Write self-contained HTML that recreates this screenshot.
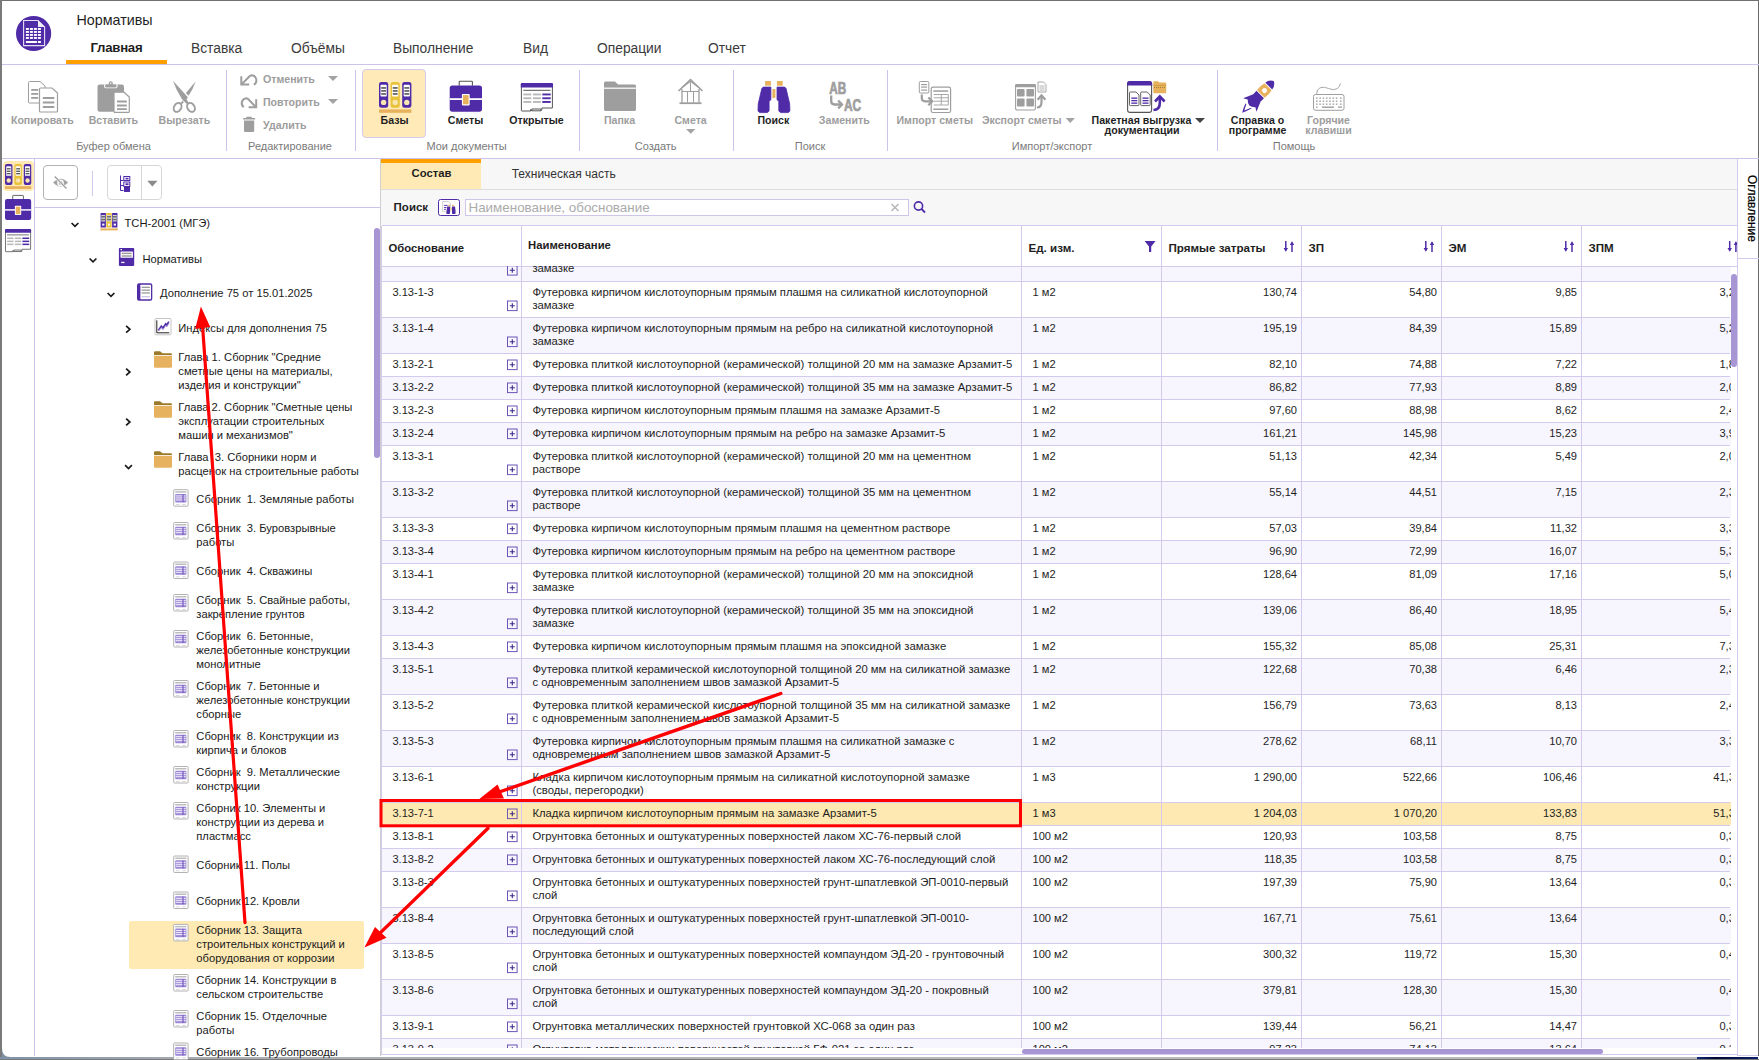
<!DOCTYPE html>
<html><head><meta charset="utf-8"><title>Нормативы</title>
<style>
html,body{margin:0;padding:0;}
body{width:1759px;height:1060px;position:relative;overflow:hidden;background:#fff;font-family:"Liberation Sans", sans-serif;color:#222;}
.b{position:absolute;}
.t{position:absolute;white-space:pre;}
.clip{position:absolute;overflow:hidden;}
svg{overflow:visible;}
</style></head><body>
<div class="b" style="left:0px;top:0px;width:1759px;height:1px;background:#707070;"></div>
<div class="b" style="left:0px;top:0px;width:2px;height:1060px;background:#7a7a7a;"></div>
<div class="b" style="left:1758px;top:0px;width:1px;height:1056px;background:#6a6a6a;"></div>
<div class="b" style="left:0px;top:1056.8px;width:1697px;height:2.3px;background:linear-gradient(90deg,#7f93a8,#a9adb2 12%,#bcbcbc 60%,#b9b9b9);"></div>
<div class="b" style="left:1697px;top:1056.8px;width:61px;height:2.3px;background:linear-gradient(90deg,#10287a,#020833 30%,#0a1f6a);"></div>
<div class="b" style="left:0px;top:1059px;width:1759px;height:1px;background:#7a7a7a;"></div>
<div class="b" style="left:66px;top:60px;width:101px;height:4px;background:#ff9f00;"></div>
<div class="b" style="left:2px;top:64px;width:1757px;height:1px;background:#cdc3ea;"></div>
<div class="b" style="left:2px;top:158px;width:1757px;height:1px;background:#cdc3ea;"></div>
<div class="b" style="left:226px;top:70px;width:1px;height:81px;background:#cdc3ea;"></div>
<div class="b" style="left:355px;top:70px;width:1px;height:81px;background:#cdc3ea;"></div>
<div class="b" style="left:579px;top:70px;width:1px;height:81px;background:#cdc3ea;"></div>
<div class="b" style="left:733px;top:70px;width:1px;height:81px;background:#cdc3ea;"></div>
<div class="b" style="left:887px;top:70px;width:1px;height:81px;background:#cdc3ea;"></div>
<div class="b" style="left:1217px;top:70px;width:1px;height:81px;background:#cdc3ea;"></div>
<div class="b" style="left:362px;top:69px;width:64px;height:68.5px;background:#ffeab8;border:1px solid #d5c9ee;border-radius:4px;box-sizing:border-box;"></div>
<div class="b" style="left:34px;top:159px;width:1px;height:897px;background:#cdc3ea;"></div>
<div class="b" style="left:3px;top:161px;width:30.7px;height:29.6px;background:#ffe9b5;border-radius:4px;"></div>
<div class="b" style="left:35px;top:207px;width:345px;height:1px;background:#cdc3ea;"></div>
<div class="b" style="left:43.3px;top:165.2px;width:34.5px;height:35.3px;border:1.2px solid #b3b3b3;border-radius:4px;box-sizing:border-box;"></div>
<div class="b" style="left:92px;top:171px;width:1px;height:25px;background:#d3c9ee;"></div>
<div class="b" style="left:107.3px;top:165.2px;width:54.5px;height:35.3px;border:1px solid #d6d6d6;border-radius:4px;box-sizing:border-box;"></div>
<div class="b" style="left:141px;top:166px;width:1px;height:34px;background:#d6d6d6;"></div>
<div class="b" style="left:374.2px;top:228px;width:5.6px;height:230px;background:#a896d4;border-radius:3px;"></div>
<div class="b" style="left:129px;top:921px;width:235px;height:47.7px;background:#ffeab4;border-radius:2px;"></div>
<div class="b" style="left:380px;top:159px;width:1px;height:897px;background:#cfcfcf;"></div>
<div class="b" style="left:381px;top:159px;width:1356px;height:67px;background:#f7f7f7;"></div>
<div class="b" style="left:381px;top:189px;width:1356px;height:1px;background:#dedede;"></div>
<div class="b" style="left:381px;top:159px;width:100px;height:30px;background:#ffeab5;"></div>
<div class="b" style="left:381px;top:159px;width:100px;height:4px;background:#ff9f00;"></div>
<div class="b" style="left:438px;top:198.9px;width:22px;height:17px;background:#fff;border:1px solid #4f2ba8;border-radius:2.5px;box-sizing:border-box;"></div>
<div class="b" style="left:465px;top:199px;width:444px;height:17px;background:#fff;border:1px solid #cfc5ea;box-sizing:border-box;"></div>
<div class="b" style="left:382px;top:225px;width:1355px;height:1px;background:#d3caee;"></div>
<div class="b" style="left:382px;top:226px;width:1355px;height:40px;background:#fff;"></div>
<div class="b" style="left:382px;top:266px;width:1355px;height:1px;background:#d3caee;"></div>
<div class="clip" style="left:380px;top:266px;width:1351px;height:782px;"><div class="b" style="left:2px;top:1px;width:1349px;height:14px;background:#f7f5fd;"></div>
<div class="b" style="left:2px;top:15px;width:1349px;height:36px;background:#fff;"></div>
<div class="b" style="left:0px;top:15px;width:1350px;height:1px;background:#d3caee;"></div>
<div class="b" style="left:2px;top:51px;width:1349px;height:36px;background:#f7f5fd;"></div>
<div class="b" style="left:0px;top:51px;width:1350px;height:1px;background:#d3caee;"></div>
<div class="b" style="left:2px;top:87px;width:1349px;height:23px;background:#fff;"></div>
<div class="b" style="left:0px;top:87px;width:1350px;height:1px;background:#d3caee;"></div>
<div class="b" style="left:2px;top:110px;width:1349px;height:23px;background:#f7f5fd;"></div>
<div class="b" style="left:0px;top:110px;width:1350px;height:1px;background:#d3caee;"></div>
<div class="b" style="left:2px;top:133px;width:1349px;height:23px;background:#fff;"></div>
<div class="b" style="left:0px;top:133px;width:1350px;height:1px;background:#d3caee;"></div>
<div class="b" style="left:2px;top:156px;width:1349px;height:23px;background:#f7f5fd;"></div>
<div class="b" style="left:0px;top:156px;width:1350px;height:1px;background:#d3caee;"></div>
<div class="b" style="left:2px;top:179px;width:1349px;height:36px;background:#fff;"></div>
<div class="b" style="left:0px;top:179px;width:1350px;height:1px;background:#d3caee;"></div>
<div class="b" style="left:2px;top:215px;width:1349px;height:36px;background:#f7f5fd;"></div>
<div class="b" style="left:0px;top:215px;width:1350px;height:1px;background:#d3caee;"></div>
<div class="b" style="left:2px;top:251px;width:1349px;height:23px;background:#fff;"></div>
<div class="b" style="left:0px;top:251px;width:1350px;height:1px;background:#d3caee;"></div>
<div class="b" style="left:2px;top:274px;width:1349px;height:23px;background:#f7f5fd;"></div>
<div class="b" style="left:0px;top:274px;width:1350px;height:1px;background:#d3caee;"></div>
<div class="b" style="left:2px;top:297px;width:1349px;height:36px;background:#fff;"></div>
<div class="b" style="left:0px;top:297px;width:1350px;height:1px;background:#d3caee;"></div>
<div class="b" style="left:2px;top:333px;width:1349px;height:36px;background:#f7f5fd;"></div>
<div class="b" style="left:0px;top:333px;width:1350px;height:1px;background:#d3caee;"></div>
<div class="b" style="left:2px;top:369px;width:1349px;height:23px;background:#fff;"></div>
<div class="b" style="left:0px;top:369px;width:1350px;height:1px;background:#d3caee;"></div>
<div class="b" style="left:2px;top:392px;width:1349px;height:36px;background:#f7f5fd;"></div>
<div class="b" style="left:0px;top:392px;width:1350px;height:1px;background:#d3caee;"></div>
<div class="b" style="left:2px;top:428px;width:1349px;height:36px;background:#fff;"></div>
<div class="b" style="left:0px;top:428px;width:1350px;height:1px;background:#d3caee;"></div>
<div class="b" style="left:2px;top:464px;width:1349px;height:36px;background:#f7f5fd;"></div>
<div class="b" style="left:0px;top:464px;width:1350px;height:1px;background:#d3caee;"></div>
<div class="b" style="left:2px;top:500px;width:1349px;height:36px;background:#fff;"></div>
<div class="b" style="left:0px;top:500px;width:1350px;height:1px;background:#d3caee;"></div>
<div class="b" style="left:2px;top:536px;width:1349px;height:23px;background:#fde9b1;"></div>
<div class="b" style="left:0px;top:536px;width:1350px;height:1px;background:#d3caee;"></div>
<div class="b" style="left:2px;top:559px;width:1349px;height:23px;background:#fff;"></div>
<div class="b" style="left:0px;top:559px;width:1350px;height:1px;background:#d3caee;"></div>
<div class="b" style="left:2px;top:582px;width:1349px;height:23px;background:#f7f5fd;"></div>
<div class="b" style="left:0px;top:582px;width:1350px;height:1px;background:#d3caee;"></div>
<div class="b" style="left:2px;top:605px;width:1349px;height:36px;background:#fff;"></div>
<div class="b" style="left:0px;top:605px;width:1350px;height:1px;background:#d3caee;"></div>
<div class="b" style="left:2px;top:641px;width:1349px;height:36px;background:#f7f5fd;"></div>
<div class="b" style="left:0px;top:641px;width:1350px;height:1px;background:#d3caee;"></div>
<div class="b" style="left:2px;top:677px;width:1349px;height:36px;background:#fff;"></div>
<div class="b" style="left:0px;top:677px;width:1350px;height:1px;background:#d3caee;"></div>
<div class="b" style="left:2px;top:713px;width:1349px;height:36px;background:#f7f5fd;"></div>
<div class="b" style="left:0px;top:713px;width:1350px;height:1px;background:#d3caee;"></div>
<div class="b" style="left:2px;top:749px;width:1349px;height:23px;background:#fff;"></div>
<div class="b" style="left:0px;top:749px;width:1350px;height:1px;background:#d3caee;"></div>
<div class="b" style="left:2px;top:772px;width:1349px;height:23px;background:#f7f5fd;"></div>
<div class="b" style="left:0px;top:772px;width:1350px;height:1px;background:#d3caee;"></div>
<div class="b" style="left:141px;top:0px;width:1px;height:800px;background:#d3caee;"></div>
<div class="b" style="left:641px;top:0px;width:1px;height:800px;background:#d3caee;"></div>
<div class="b" style="left:781px;top:0px;width:1px;height:800px;background:#d3caee;"></div>
<div class="b" style="left:921px;top:0px;width:1px;height:800px;background:#d3caee;"></div>
<div class="b" style="left:1061px;top:0px;width:1px;height:800px;background:#d3caee;"></div>
<div class="b" style="left:1201px;top:0px;width:1px;height:800px;background:#d3caee;"></div>
<svg class="b" style="left:0;top:0" width="1351" height="800"><rect x="127.5" y="-0.5" width="9.6" height="9.6" fill="none" stroke="#6d55b8" stroke-width="1"/><path d="M129.8 4.3 H134.8 M132.3 1.7999999999999998 V6.8" stroke="#3d2a8a" stroke-width="1.1"/><rect x="127.5" y="35.0" width="9.6" height="9.6" fill="none" stroke="#6d55b8" stroke-width="1"/><path d="M129.8 39.8 H134.8 M132.3 37.3 V42.3" stroke="#3d2a8a" stroke-width="1.1"/><rect x="127.5" y="71.0" width="9.6" height="9.6" fill="none" stroke="#6d55b8" stroke-width="1"/><path d="M129.8 75.8 H134.8 M132.3 73.3 V78.3" stroke="#3d2a8a" stroke-width="1.1"/><rect x="127.5" y="94.0" width="9.6" height="9.6" fill="none" stroke="#6d55b8" stroke-width="1"/><path d="M129.8 98.8 H134.8 M132.3 96.3 V101.3" stroke="#3d2a8a" stroke-width="1.1"/><rect x="127.5" y="117.0" width="9.6" height="9.6" fill="none" stroke="#6d55b8" stroke-width="1"/><path d="M129.8 121.8 H134.8 M132.3 119.3 V124.3" stroke="#3d2a8a" stroke-width="1.1"/><rect x="127.5" y="140.0" width="9.6" height="9.6" fill="none" stroke="#6d55b8" stroke-width="1"/><path d="M129.8 144.8 H134.8 M132.3 142.3 V147.3" stroke="#3d2a8a" stroke-width="1.1"/><rect x="127.5" y="163.0" width="9.6" height="9.6" fill="none" stroke="#6d55b8" stroke-width="1"/><path d="M129.8 167.8 H134.8 M132.3 165.3 V170.3" stroke="#3d2a8a" stroke-width="1.1"/><rect x="127.5" y="199.0" width="9.6" height="9.6" fill="none" stroke="#6d55b8" stroke-width="1"/><path d="M129.8 203.8 H134.8 M132.3 201.3 V206.3" stroke="#3d2a8a" stroke-width="1.1"/><rect x="127.5" y="235.0" width="9.6" height="9.6" fill="none" stroke="#6d55b8" stroke-width="1"/><path d="M129.8 239.8 H134.8 M132.3 237.3 V242.3" stroke="#3d2a8a" stroke-width="1.1"/><rect x="127.5" y="258.0" width="9.6" height="9.6" fill="none" stroke="#6d55b8" stroke-width="1"/><path d="M129.8 262.8 H134.8 M132.3 260.3 V265.3" stroke="#3d2a8a" stroke-width="1.1"/><rect x="127.5" y="281.0" width="9.6" height="9.6" fill="none" stroke="#6d55b8" stroke-width="1"/><path d="M129.8 285.8 H134.8 M132.3 283.3 V288.3" stroke="#3d2a8a" stroke-width="1.1"/><rect x="127.5" y="317.0" width="9.6" height="9.6" fill="none" stroke="#6d55b8" stroke-width="1"/><path d="M129.8 321.8 H134.8 M132.3 319.3 V324.3" stroke="#3d2a8a" stroke-width="1.1"/><rect x="127.5" y="353.0" width="9.6" height="9.6" fill="none" stroke="#6d55b8" stroke-width="1"/><path d="M129.8 357.8 H134.8 M132.3 355.3 V360.3" stroke="#3d2a8a" stroke-width="1.1"/><rect x="127.5" y="376.0" width="9.6" height="9.6" fill="none" stroke="#6d55b8" stroke-width="1"/><path d="M129.8 380.8 H134.8 M132.3 378.3 V383.3" stroke="#3d2a8a" stroke-width="1.1"/><rect x="127.5" y="412.0" width="9.6" height="9.6" fill="none" stroke="#6d55b8" stroke-width="1"/><path d="M129.8 416.8 H134.8 M132.3 414.3 V419.3" stroke="#3d2a8a" stroke-width="1.1"/><rect x="127.5" y="448.0" width="9.6" height="9.6" fill="none" stroke="#6d55b8" stroke-width="1"/><path d="M129.8 452.8 H134.8 M132.3 450.3 V455.3" stroke="#3d2a8a" stroke-width="1.1"/><rect x="127.5" y="484.0" width="9.6" height="9.6" fill="none" stroke="#6d55b8" stroke-width="1"/><path d="M129.8 488.8 H134.8 M132.3 486.3 V491.3" stroke="#3d2a8a" stroke-width="1.1"/><rect x="127.5" y="520.0" width="9.6" height="9.6" fill="none" stroke="#6d55b8" stroke-width="1"/><path d="M129.8 524.8 H134.8 M132.3 522.3 V527.3" stroke="#3d2a8a" stroke-width="1.1"/><rect x="127.5" y="543.0" width="9.6" height="9.6" fill="none" stroke="#6d55b8" stroke-width="1"/><path d="M129.8 547.8 H134.8 M132.3 545.3 V550.3" stroke="#3d2a8a" stroke-width="1.1"/><rect x="127.5" y="566.0" width="9.6" height="9.6" fill="none" stroke="#6d55b8" stroke-width="1"/><path d="M129.8 570.8 H134.8 M132.3 568.3 V573.3" stroke="#3d2a8a" stroke-width="1.1"/><rect x="127.5" y="589.0" width="9.6" height="9.6" fill="none" stroke="#6d55b8" stroke-width="1"/><path d="M129.8 593.8 H134.8 M132.3 591.3 V596.3" stroke="#3d2a8a" stroke-width="1.1"/><rect x="127.5" y="625.0" width="9.6" height="9.6" fill="none" stroke="#6d55b8" stroke-width="1"/><path d="M129.8 629.8 H134.8 M132.3 627.3 V632.3" stroke="#3d2a8a" stroke-width="1.1"/><rect x="127.5" y="661.0" width="9.6" height="9.6" fill="none" stroke="#6d55b8" stroke-width="1"/><path d="M129.8 665.8 H134.8 M132.3 663.3 V668.3" stroke="#3d2a8a" stroke-width="1.1"/><rect x="127.5" y="697.0" width="9.6" height="9.6" fill="none" stroke="#6d55b8" stroke-width="1"/><path d="M129.8 701.8 H134.8 M132.3 699.3 V704.3" stroke="#3d2a8a" stroke-width="1.1"/><rect x="127.5" y="733.0" width="9.6" height="9.6" fill="none" stroke="#6d55b8" stroke-width="1"/><path d="M129.8 737.8 H134.8 M132.3 735.3 V740.3" stroke="#3d2a8a" stroke-width="1.1"/><rect x="127.5" y="756.0" width="9.6" height="9.6" fill="none" stroke="#6d55b8" stroke-width="1"/><path d="M129.8 760.8 H134.8 M132.3 758.3 V763.3" stroke="#3d2a8a" stroke-width="1.1"/><rect x="127.5" y="779.0" width="9.6" height="9.6" fill="none" stroke="#6d55b8" stroke-width="1"/><path d="M129.8 783.8 H134.8 M132.3 781.3 V786.3" stroke="#3d2a8a" stroke-width="1.1"/></svg><div class="t" style="left:152.39999999999998px;top:-2.57px;font-size:11.3px;line-height:11.3px;color:#1e1e1e;">замазке</div>
<div class="t" style="left:12.399999999999977px;top:20.60px;font-size:11.1px;line-height:11.1px;color:#1e1e1e;">3.13-1-3</div>
<div class="t" style="left:152.39999999999998px;top:19.58px;font-size:11.3px;line-height:13px;color:#1e1e1e;">Футеровка кирпичом кислотоупорным прямым плашмя на силикатной кислотоупорной<br>замазке</div>
<div class="t" style="left:652.5px;top:20.60px;font-size:11.1px;line-height:11.1px;color:#1e1e1e;">1 м2</div>
<div class="t" style="left:517px;width:400px;text-align:right;top:20.60px;font-size:11.1px;line-height:11.1px;color:#1e1e1e;">130,74</div>
<div class="t" style="left:657px;width:400px;text-align:right;top:20.60px;font-size:11.1px;line-height:11.1px;color:#1e1e1e;">54,80</div>
<div class="t" style="left:797px;width:400px;text-align:right;top:20.60px;font-size:11.1px;line-height:11.1px;color:#1e1e1e;">9,85</div>
<div class="t" style="left:961px;width:400px;text-align:right;top:20.60px;font-size:11.1px;line-height:11.1px;color:#1e1e1e;">3,20</div>
<div class="t" style="left:12.399999999999977px;top:56.60px;font-size:11.1px;line-height:11.1px;color:#1e1e1e;">3.13-1-4</div>
<div class="t" style="left:152.39999999999998px;top:55.58px;font-size:11.3px;line-height:13px;color:#1e1e1e;">Футеровка кирпичом кислотоупорным прямым на ребро на силикатной кислотоупорной<br>замазке</div>
<div class="t" style="left:652.5px;top:56.60px;font-size:11.1px;line-height:11.1px;color:#1e1e1e;">1 м2</div>
<div class="t" style="left:517px;width:400px;text-align:right;top:56.60px;font-size:11.1px;line-height:11.1px;color:#1e1e1e;">195,19</div>
<div class="t" style="left:657px;width:400px;text-align:right;top:56.60px;font-size:11.1px;line-height:11.1px;color:#1e1e1e;">84,39</div>
<div class="t" style="left:797px;width:400px;text-align:right;top:56.60px;font-size:11.1px;line-height:11.1px;color:#1e1e1e;">15,89</div>
<div class="t" style="left:961px;width:400px;text-align:right;top:56.60px;font-size:11.1px;line-height:11.1px;color:#1e1e1e;">5,20</div>
<div class="t" style="left:12.399999999999977px;top:92.60px;font-size:11.1px;line-height:11.1px;color:#1e1e1e;">3.13-2-1</div>
<div class="t" style="left:152.39999999999998px;top:91.58px;font-size:11.3px;line-height:13px;color:#1e1e1e;">Футеровка плиткой кислотоупорной (керамической) толщиной 20 мм на замазке Арзамит-5</div>
<div class="t" style="left:652.5px;top:92.60px;font-size:11.1px;line-height:11.1px;color:#1e1e1e;">1 м2</div>
<div class="t" style="left:517px;width:400px;text-align:right;top:92.60px;font-size:11.1px;line-height:11.1px;color:#1e1e1e;">82,10</div>
<div class="t" style="left:657px;width:400px;text-align:right;top:92.60px;font-size:11.1px;line-height:11.1px;color:#1e1e1e;">74,88</div>
<div class="t" style="left:797px;width:400px;text-align:right;top:92.60px;font-size:11.1px;line-height:11.1px;color:#1e1e1e;">7,22</div>
<div class="t" style="left:961px;width:400px;text-align:right;top:92.60px;font-size:11.1px;line-height:11.1px;color:#1e1e1e;">1,80</div>
<div class="t" style="left:12.399999999999977px;top:115.60px;font-size:11.1px;line-height:11.1px;color:#1e1e1e;">3.13-2-2</div>
<div class="t" style="left:152.39999999999998px;top:114.58px;font-size:11.3px;line-height:13px;color:#1e1e1e;">Футеровка плиткой кислотоупорной (керамической) толщиной 35 мм на замазке Арзамит-5</div>
<div class="t" style="left:652.5px;top:115.60px;font-size:11.1px;line-height:11.1px;color:#1e1e1e;">1 м2</div>
<div class="t" style="left:517px;width:400px;text-align:right;top:115.60px;font-size:11.1px;line-height:11.1px;color:#1e1e1e;">86,82</div>
<div class="t" style="left:657px;width:400px;text-align:right;top:115.60px;font-size:11.1px;line-height:11.1px;color:#1e1e1e;">77,93</div>
<div class="t" style="left:797px;width:400px;text-align:right;top:115.60px;font-size:11.1px;line-height:11.1px;color:#1e1e1e;">8,89</div>
<div class="t" style="left:961px;width:400px;text-align:right;top:115.60px;font-size:11.1px;line-height:11.1px;color:#1e1e1e;">2,00</div>
<div class="t" style="left:12.399999999999977px;top:138.60px;font-size:11.1px;line-height:11.1px;color:#1e1e1e;">3.13-2-3</div>
<div class="t" style="left:152.39999999999998px;top:137.58px;font-size:11.3px;line-height:13px;color:#1e1e1e;">Футеровка кирпичом кислотоупорным прямым плашмя на замазке Арзамит-5</div>
<div class="t" style="left:652.5px;top:138.60px;font-size:11.1px;line-height:11.1px;color:#1e1e1e;">1 м2</div>
<div class="t" style="left:517px;width:400px;text-align:right;top:138.60px;font-size:11.1px;line-height:11.1px;color:#1e1e1e;">97,60</div>
<div class="t" style="left:657px;width:400px;text-align:right;top:138.60px;font-size:11.1px;line-height:11.1px;color:#1e1e1e;">88,98</div>
<div class="t" style="left:797px;width:400px;text-align:right;top:138.60px;font-size:11.1px;line-height:11.1px;color:#1e1e1e;">8,62</div>
<div class="t" style="left:961px;width:400px;text-align:right;top:138.60px;font-size:11.1px;line-height:11.1px;color:#1e1e1e;">2,40</div>
<div class="t" style="left:12.399999999999977px;top:161.60px;font-size:11.1px;line-height:11.1px;color:#1e1e1e;">3.13-2-4</div>
<div class="t" style="left:152.39999999999998px;top:160.58px;font-size:11.3px;line-height:13px;color:#1e1e1e;">Футеровка кирпичом кислотоупорным прямым на ребро на замазке Арзамит-5</div>
<div class="t" style="left:652.5px;top:161.60px;font-size:11.1px;line-height:11.1px;color:#1e1e1e;">1 м2</div>
<div class="t" style="left:517px;width:400px;text-align:right;top:161.60px;font-size:11.1px;line-height:11.1px;color:#1e1e1e;">161,21</div>
<div class="t" style="left:657px;width:400px;text-align:right;top:161.60px;font-size:11.1px;line-height:11.1px;color:#1e1e1e;">145,98</div>
<div class="t" style="left:797px;width:400px;text-align:right;top:161.60px;font-size:11.1px;line-height:11.1px;color:#1e1e1e;">15,23</div>
<div class="t" style="left:961px;width:400px;text-align:right;top:161.60px;font-size:11.1px;line-height:11.1px;color:#1e1e1e;">3,90</div>
<div class="t" style="left:12.399999999999977px;top:184.60px;font-size:11.1px;line-height:11.1px;color:#1e1e1e;">3.13-3-1</div>
<div class="t" style="left:152.39999999999998px;top:183.58px;font-size:11.3px;line-height:13px;color:#1e1e1e;">Футеровка плиткой кислотоупорной (керамической) толщиной 20 мм на цементном<br>растворе</div>
<div class="t" style="left:652.5px;top:184.60px;font-size:11.1px;line-height:11.1px;color:#1e1e1e;">1 м2</div>
<div class="t" style="left:517px;width:400px;text-align:right;top:184.60px;font-size:11.1px;line-height:11.1px;color:#1e1e1e;">51,13</div>
<div class="t" style="left:657px;width:400px;text-align:right;top:184.60px;font-size:11.1px;line-height:11.1px;color:#1e1e1e;">42,34</div>
<div class="t" style="left:797px;width:400px;text-align:right;top:184.60px;font-size:11.1px;line-height:11.1px;color:#1e1e1e;">5,49</div>
<div class="t" style="left:961px;width:400px;text-align:right;top:184.60px;font-size:11.1px;line-height:11.1px;color:#1e1e1e;">2,00</div>
<div class="t" style="left:12.399999999999977px;top:220.60px;font-size:11.1px;line-height:11.1px;color:#1e1e1e;">3.13-3-2</div>
<div class="t" style="left:152.39999999999998px;top:219.58px;font-size:11.3px;line-height:13px;color:#1e1e1e;">Футеровка плиткой кислотоупорной (керамической) толщиной 35 мм на цементном<br>растворе</div>
<div class="t" style="left:652.5px;top:220.60px;font-size:11.1px;line-height:11.1px;color:#1e1e1e;">1 м2</div>
<div class="t" style="left:517px;width:400px;text-align:right;top:220.60px;font-size:11.1px;line-height:11.1px;color:#1e1e1e;">55,14</div>
<div class="t" style="left:657px;width:400px;text-align:right;top:220.60px;font-size:11.1px;line-height:11.1px;color:#1e1e1e;">44,51</div>
<div class="t" style="left:797px;width:400px;text-align:right;top:220.60px;font-size:11.1px;line-height:11.1px;color:#1e1e1e;">7,15</div>
<div class="t" style="left:961px;width:400px;text-align:right;top:220.60px;font-size:11.1px;line-height:11.1px;color:#1e1e1e;">2,30</div>
<div class="t" style="left:12.399999999999977px;top:256.60px;font-size:11.1px;line-height:11.1px;color:#1e1e1e;">3.13-3-3</div>
<div class="t" style="left:152.39999999999998px;top:255.58px;font-size:11.3px;line-height:13px;color:#1e1e1e;">Футеровка кирпичом кислотоупорным прямым плашмя на цементном растворе</div>
<div class="t" style="left:652.5px;top:256.60px;font-size:11.1px;line-height:11.1px;color:#1e1e1e;">1 м2</div>
<div class="t" style="left:517px;width:400px;text-align:right;top:256.60px;font-size:11.1px;line-height:11.1px;color:#1e1e1e;">57,03</div>
<div class="t" style="left:657px;width:400px;text-align:right;top:256.60px;font-size:11.1px;line-height:11.1px;color:#1e1e1e;">39,84</div>
<div class="t" style="left:797px;width:400px;text-align:right;top:256.60px;font-size:11.1px;line-height:11.1px;color:#1e1e1e;">11,32</div>
<div class="t" style="left:961px;width:400px;text-align:right;top:256.60px;font-size:11.1px;line-height:11.1px;color:#1e1e1e;">3,30</div>
<div class="t" style="left:12.399999999999977px;top:279.60px;font-size:11.1px;line-height:11.1px;color:#1e1e1e;">3.13-3-4</div>
<div class="t" style="left:152.39999999999998px;top:278.58px;font-size:11.3px;line-height:13px;color:#1e1e1e;">Футеровка кирпичом кислотоупорным прямым на ребро на цементном растворе</div>
<div class="t" style="left:652.5px;top:279.60px;font-size:11.1px;line-height:11.1px;color:#1e1e1e;">1 м2</div>
<div class="t" style="left:517px;width:400px;text-align:right;top:279.60px;font-size:11.1px;line-height:11.1px;color:#1e1e1e;">96,90</div>
<div class="t" style="left:657px;width:400px;text-align:right;top:279.60px;font-size:11.1px;line-height:11.1px;color:#1e1e1e;">72,99</div>
<div class="t" style="left:797px;width:400px;text-align:right;top:279.60px;font-size:11.1px;line-height:11.1px;color:#1e1e1e;">16,07</div>
<div class="t" style="left:961px;width:400px;text-align:right;top:279.60px;font-size:11.1px;line-height:11.1px;color:#1e1e1e;">5,30</div>
<div class="t" style="left:12.399999999999977px;top:302.60px;font-size:11.1px;line-height:11.1px;color:#1e1e1e;">3.13-4-1</div>
<div class="t" style="left:152.39999999999998px;top:301.58px;font-size:11.3px;line-height:13px;color:#1e1e1e;">Футеровка плиткой кислотоупорной (керамической) толщиной 20 мм на эпоксидной<br>замазке</div>
<div class="t" style="left:652.5px;top:302.60px;font-size:11.1px;line-height:11.1px;color:#1e1e1e;">1 м2</div>
<div class="t" style="left:517px;width:400px;text-align:right;top:302.60px;font-size:11.1px;line-height:11.1px;color:#1e1e1e;">128,64</div>
<div class="t" style="left:657px;width:400px;text-align:right;top:302.60px;font-size:11.1px;line-height:11.1px;color:#1e1e1e;">81,09</div>
<div class="t" style="left:797px;width:400px;text-align:right;top:302.60px;font-size:11.1px;line-height:11.1px;color:#1e1e1e;">17,16</div>
<div class="t" style="left:961px;width:400px;text-align:right;top:302.60px;font-size:11.1px;line-height:11.1px;color:#1e1e1e;">5,00</div>
<div class="t" style="left:12.399999999999977px;top:338.60px;font-size:11.1px;line-height:11.1px;color:#1e1e1e;">3.13-4-2</div>
<div class="t" style="left:152.39999999999998px;top:337.58px;font-size:11.3px;line-height:13px;color:#1e1e1e;">Футеровка плиткой кислотоупорной (керамической) толщиной 35 мм на эпоксидной<br>замазке</div>
<div class="t" style="left:652.5px;top:338.60px;font-size:11.1px;line-height:11.1px;color:#1e1e1e;">1 м2</div>
<div class="t" style="left:517px;width:400px;text-align:right;top:338.60px;font-size:11.1px;line-height:11.1px;color:#1e1e1e;">139,06</div>
<div class="t" style="left:657px;width:400px;text-align:right;top:338.60px;font-size:11.1px;line-height:11.1px;color:#1e1e1e;">86,40</div>
<div class="t" style="left:797px;width:400px;text-align:right;top:338.60px;font-size:11.1px;line-height:11.1px;color:#1e1e1e;">18,95</div>
<div class="t" style="left:961px;width:400px;text-align:right;top:338.60px;font-size:11.1px;line-height:11.1px;color:#1e1e1e;">5,40</div>
<div class="t" style="left:12.399999999999977px;top:374.60px;font-size:11.1px;line-height:11.1px;color:#1e1e1e;">3.13-4-3</div>
<div class="t" style="left:152.39999999999998px;top:373.58px;font-size:11.3px;line-height:13px;color:#1e1e1e;">Футеровка кирпичом кислотоупорным прямым плашмя на эпоксидной замазке</div>
<div class="t" style="left:652.5px;top:374.60px;font-size:11.1px;line-height:11.1px;color:#1e1e1e;">1 м2</div>
<div class="t" style="left:517px;width:400px;text-align:right;top:374.60px;font-size:11.1px;line-height:11.1px;color:#1e1e1e;">155,32</div>
<div class="t" style="left:657px;width:400px;text-align:right;top:374.60px;font-size:11.1px;line-height:11.1px;color:#1e1e1e;">85,08</div>
<div class="t" style="left:797px;width:400px;text-align:right;top:374.60px;font-size:11.1px;line-height:11.1px;color:#1e1e1e;">25,31</div>
<div class="t" style="left:961px;width:400px;text-align:right;top:374.60px;font-size:11.1px;line-height:11.1px;color:#1e1e1e;">7,30</div>
<div class="t" style="left:12.399999999999977px;top:397.60px;font-size:11.1px;line-height:11.1px;color:#1e1e1e;">3.13-5-1</div>
<div class="t" style="left:152.39999999999998px;top:396.58px;font-size:11.3px;line-height:13px;color:#1e1e1e;">Футеровка плиткой керамической кислотоупорной толщиной 20 мм на силикатной замазке<br>с одновременным заполнением швов замазкой Арзамит-5</div>
<div class="t" style="left:652.5px;top:397.60px;font-size:11.1px;line-height:11.1px;color:#1e1e1e;">1 м2</div>
<div class="t" style="left:517px;width:400px;text-align:right;top:397.60px;font-size:11.1px;line-height:11.1px;color:#1e1e1e;">122,68</div>
<div class="t" style="left:657px;width:400px;text-align:right;top:397.60px;font-size:11.1px;line-height:11.1px;color:#1e1e1e;">70,38</div>
<div class="t" style="left:797px;width:400px;text-align:right;top:397.60px;font-size:11.1px;line-height:11.1px;color:#1e1e1e;">6,46</div>
<div class="t" style="left:961px;width:400px;text-align:right;top:397.60px;font-size:11.1px;line-height:11.1px;color:#1e1e1e;">2,30</div>
<div class="t" style="left:12.399999999999977px;top:433.60px;font-size:11.1px;line-height:11.1px;color:#1e1e1e;">3.13-5-2</div>
<div class="t" style="left:152.39999999999998px;top:432.58px;font-size:11.3px;line-height:13px;color:#1e1e1e;">Футеровка плиткой керамической кислотоупорной толщиной 35 мм на силикатной замазке<br>с одновременным заполнением швов замазкой Арзамит-5</div>
<div class="t" style="left:652.5px;top:433.60px;font-size:11.1px;line-height:11.1px;color:#1e1e1e;">1 м2</div>
<div class="t" style="left:517px;width:400px;text-align:right;top:433.60px;font-size:11.1px;line-height:11.1px;color:#1e1e1e;">156,79</div>
<div class="t" style="left:657px;width:400px;text-align:right;top:433.60px;font-size:11.1px;line-height:11.1px;color:#1e1e1e;">73,63</div>
<div class="t" style="left:797px;width:400px;text-align:right;top:433.60px;font-size:11.1px;line-height:11.1px;color:#1e1e1e;">8,13</div>
<div class="t" style="left:961px;width:400px;text-align:right;top:433.60px;font-size:11.1px;line-height:11.1px;color:#1e1e1e;">2,40</div>
<div class="t" style="left:12.399999999999977px;top:469.60px;font-size:11.1px;line-height:11.1px;color:#1e1e1e;">3.13-5-3</div>
<div class="t" style="left:152.39999999999998px;top:468.58px;font-size:11.3px;line-height:13px;color:#1e1e1e;">Футеровка кирпичом кислотоупорным прямым плашмя на силикатной замазке с<br>одновременным заполнением швов замазкой Арзамит-5</div>
<div class="t" style="left:652.5px;top:469.60px;font-size:11.1px;line-height:11.1px;color:#1e1e1e;">1 м2</div>
<div class="t" style="left:517px;width:400px;text-align:right;top:469.60px;font-size:11.1px;line-height:11.1px;color:#1e1e1e;">278,62</div>
<div class="t" style="left:657px;width:400px;text-align:right;top:469.60px;font-size:11.1px;line-height:11.1px;color:#1e1e1e;">68,11</div>
<div class="t" style="left:797px;width:400px;text-align:right;top:469.60px;font-size:11.1px;line-height:11.1px;color:#1e1e1e;">10,70</div>
<div class="t" style="left:961px;width:400px;text-align:right;top:469.60px;font-size:11.1px;line-height:11.1px;color:#1e1e1e;">3,30</div>
<div class="t" style="left:12.399999999999977px;top:505.60px;font-size:11.1px;line-height:11.1px;color:#1e1e1e;">3.13-6-1</div>
<div class="t" style="left:152.39999999999998px;top:504.58px;font-size:11.3px;line-height:13px;color:#1e1e1e;">Кладка кирпичом кислотоупорным прямым на силикатной кислотоупорной замазке<br>(своды, перегородки)</div>
<div class="t" style="left:652.5px;top:505.60px;font-size:11.1px;line-height:11.1px;color:#1e1e1e;">1 м3</div>
<div class="t" style="left:517px;width:400px;text-align:right;top:505.60px;font-size:11.1px;line-height:11.1px;color:#1e1e1e;">1 290,00</div>
<div class="t" style="left:657px;width:400px;text-align:right;top:505.60px;font-size:11.1px;line-height:11.1px;color:#1e1e1e;">522,66</div>
<div class="t" style="left:797px;width:400px;text-align:right;top:505.60px;font-size:11.1px;line-height:11.1px;color:#1e1e1e;">106,46</div>
<div class="t" style="left:961px;width:400px;text-align:right;top:505.60px;font-size:11.1px;line-height:11.1px;color:#1e1e1e;">41,30</div>
<div class="t" style="left:12.399999999999977px;top:541.60px;font-size:11.1px;line-height:11.1px;color:#1e1e1e;">3.13-7-1</div>
<div class="t" style="left:152.39999999999998px;top:540.58px;font-size:11.3px;line-height:13px;color:#1e1e1e;">Кладка кирпичом кислотоупорным прямым на замазке Арзамит-5</div>
<div class="t" style="left:652.5px;top:541.60px;font-size:11.1px;line-height:11.1px;color:#1e1e1e;">1 м3</div>
<div class="t" style="left:517px;width:400px;text-align:right;top:541.60px;font-size:11.1px;line-height:11.1px;color:#1e1e1e;">1 204,03</div>
<div class="t" style="left:657px;width:400px;text-align:right;top:541.60px;font-size:11.1px;line-height:11.1px;color:#1e1e1e;">1 070,20</div>
<div class="t" style="left:797px;width:400px;text-align:right;top:541.60px;font-size:11.1px;line-height:11.1px;color:#1e1e1e;">133,83</div>
<div class="t" style="left:961px;width:400px;text-align:right;top:541.60px;font-size:11.1px;line-height:11.1px;color:#1e1e1e;">51,30</div>
<div class="t" style="left:12.399999999999977px;top:564.60px;font-size:11.1px;line-height:11.1px;color:#1e1e1e;">3.13-8-1</div>
<div class="t" style="left:152.39999999999998px;top:563.58px;font-size:11.3px;line-height:13px;color:#1e1e1e;">Огрунтовка бетонных и оштукатуренных поверхностей лаком ХС-76-первый слой</div>
<div class="t" style="left:652.5px;top:564.60px;font-size:11.1px;line-height:11.1px;color:#1e1e1e;">100 м2</div>
<div class="t" style="left:517px;width:400px;text-align:right;top:564.60px;font-size:11.1px;line-height:11.1px;color:#1e1e1e;">120,93</div>
<div class="t" style="left:657px;width:400px;text-align:right;top:564.60px;font-size:11.1px;line-height:11.1px;color:#1e1e1e;">103,58</div>
<div class="t" style="left:797px;width:400px;text-align:right;top:564.60px;font-size:11.1px;line-height:11.1px;color:#1e1e1e;">8,75</div>
<div class="t" style="left:961px;width:400px;text-align:right;top:564.60px;font-size:11.1px;line-height:11.1px;color:#1e1e1e;">0,30</div>
<div class="t" style="left:12.399999999999977px;top:587.60px;font-size:11.1px;line-height:11.1px;color:#1e1e1e;">3.13-8-2</div>
<div class="t" style="left:152.39999999999998px;top:586.58px;font-size:11.3px;line-height:13px;color:#1e1e1e;">Огрунтовка бетонных и оштукатуренных поверхностей лаком ХС-76-последующий слой</div>
<div class="t" style="left:652.5px;top:587.60px;font-size:11.1px;line-height:11.1px;color:#1e1e1e;">100 м2</div>
<div class="t" style="left:517px;width:400px;text-align:right;top:587.60px;font-size:11.1px;line-height:11.1px;color:#1e1e1e;">118,35</div>
<div class="t" style="left:657px;width:400px;text-align:right;top:587.60px;font-size:11.1px;line-height:11.1px;color:#1e1e1e;">103,58</div>
<div class="t" style="left:797px;width:400px;text-align:right;top:587.60px;font-size:11.1px;line-height:11.1px;color:#1e1e1e;">8,75</div>
<div class="t" style="left:961px;width:400px;text-align:right;top:587.60px;font-size:11.1px;line-height:11.1px;color:#1e1e1e;">0,30</div>
<div class="t" style="left:12.399999999999977px;top:610.60px;font-size:11.1px;line-height:11.1px;color:#1e1e1e;">3.13-8-3</div>
<div class="t" style="left:152.39999999999998px;top:609.58px;font-size:11.3px;line-height:13px;color:#1e1e1e;">Огрунтовка бетонных и оштукатуренных поверхностей грунт-шпатлевкой ЭП-0010-первый<br>слой</div>
<div class="t" style="left:652.5px;top:610.60px;font-size:11.1px;line-height:11.1px;color:#1e1e1e;">100 м2</div>
<div class="t" style="left:517px;width:400px;text-align:right;top:610.60px;font-size:11.1px;line-height:11.1px;color:#1e1e1e;">197,39</div>
<div class="t" style="left:657px;width:400px;text-align:right;top:610.60px;font-size:11.1px;line-height:11.1px;color:#1e1e1e;">75,90</div>
<div class="t" style="left:797px;width:400px;text-align:right;top:610.60px;font-size:11.1px;line-height:11.1px;color:#1e1e1e;">13,64</div>
<div class="t" style="left:961px;width:400px;text-align:right;top:610.60px;font-size:11.1px;line-height:11.1px;color:#1e1e1e;">0,30</div>
<div class="t" style="left:12.399999999999977px;top:646.60px;font-size:11.1px;line-height:11.1px;color:#1e1e1e;">3.13-8-4</div>
<div class="t" style="left:152.39999999999998px;top:645.58px;font-size:11.3px;line-height:13px;color:#1e1e1e;">Огрунтовка бетонных и оштукатуренных поверхностей грунт-шпатлевкой ЭП-0010-<br>последующий слой</div>
<div class="t" style="left:652.5px;top:646.60px;font-size:11.1px;line-height:11.1px;color:#1e1e1e;">100 м2</div>
<div class="t" style="left:517px;width:400px;text-align:right;top:646.60px;font-size:11.1px;line-height:11.1px;color:#1e1e1e;">167,71</div>
<div class="t" style="left:657px;width:400px;text-align:right;top:646.60px;font-size:11.1px;line-height:11.1px;color:#1e1e1e;">75,61</div>
<div class="t" style="left:797px;width:400px;text-align:right;top:646.60px;font-size:11.1px;line-height:11.1px;color:#1e1e1e;">13,64</div>
<div class="t" style="left:961px;width:400px;text-align:right;top:646.60px;font-size:11.1px;line-height:11.1px;color:#1e1e1e;">0,30</div>
<div class="t" style="left:12.399999999999977px;top:682.60px;font-size:11.1px;line-height:11.1px;color:#1e1e1e;">3.13-8-5</div>
<div class="t" style="left:152.39999999999998px;top:681.58px;font-size:11.3px;line-height:13px;color:#1e1e1e;">Огрунтовка бетонных и оштукатуренных поверхностей компаундом ЭД-20 - грунтовочный<br>слой</div>
<div class="t" style="left:652.5px;top:682.60px;font-size:11.1px;line-height:11.1px;color:#1e1e1e;">100 м2</div>
<div class="t" style="left:517px;width:400px;text-align:right;top:682.60px;font-size:11.1px;line-height:11.1px;color:#1e1e1e;">300,32</div>
<div class="t" style="left:657px;width:400px;text-align:right;top:682.60px;font-size:11.1px;line-height:11.1px;color:#1e1e1e;">119,72</div>
<div class="t" style="left:797px;width:400px;text-align:right;top:682.60px;font-size:11.1px;line-height:11.1px;color:#1e1e1e;">15,30</div>
<div class="t" style="left:961px;width:400px;text-align:right;top:682.60px;font-size:11.1px;line-height:11.1px;color:#1e1e1e;">0,40</div>
<div class="t" style="left:12.399999999999977px;top:718.60px;font-size:11.1px;line-height:11.1px;color:#1e1e1e;">3.13-8-6</div>
<div class="t" style="left:152.39999999999998px;top:717.58px;font-size:11.3px;line-height:13px;color:#1e1e1e;">Огрунтовка бетонных и оштукатуренных поверхностей компаундом ЭД-20 - покровный<br>слой</div>
<div class="t" style="left:652.5px;top:718.60px;font-size:11.1px;line-height:11.1px;color:#1e1e1e;">100 м2</div>
<div class="t" style="left:517px;width:400px;text-align:right;top:718.60px;font-size:11.1px;line-height:11.1px;color:#1e1e1e;">379,81</div>
<div class="t" style="left:657px;width:400px;text-align:right;top:718.60px;font-size:11.1px;line-height:11.1px;color:#1e1e1e;">128,30</div>
<div class="t" style="left:797px;width:400px;text-align:right;top:718.60px;font-size:11.1px;line-height:11.1px;color:#1e1e1e;">15,30</div>
<div class="t" style="left:961px;width:400px;text-align:right;top:718.60px;font-size:11.1px;line-height:11.1px;color:#1e1e1e;">0,40</div>
<div class="t" style="left:12.399999999999977px;top:754.60px;font-size:11.1px;line-height:11.1px;color:#1e1e1e;">3.13-9-1</div>
<div class="t" style="left:152.39999999999998px;top:753.58px;font-size:11.3px;line-height:13px;color:#1e1e1e;">Огрунтовка металлических поверхностей грунтовкой ХС-068 за один раз</div>
<div class="t" style="left:652.5px;top:754.60px;font-size:11.1px;line-height:11.1px;color:#1e1e1e;">100 м2</div>
<div class="t" style="left:517px;width:400px;text-align:right;top:754.60px;font-size:11.1px;line-height:11.1px;color:#1e1e1e;">139,44</div>
<div class="t" style="left:657px;width:400px;text-align:right;top:754.60px;font-size:11.1px;line-height:11.1px;color:#1e1e1e;">56,21</div>
<div class="t" style="left:797px;width:400px;text-align:right;top:754.60px;font-size:11.1px;line-height:11.1px;color:#1e1e1e;">14,47</div>
<div class="t" style="left:961px;width:400px;text-align:right;top:754.60px;font-size:11.1px;line-height:11.1px;color:#1e1e1e;">0,30</div>
<div class="t" style="left:12.399999999999977px;top:777.60px;font-size:11.1px;line-height:11.1px;color:#1e1e1e;">3.13-9-2</div>
<div class="t" style="left:152.39999999999998px;top:776.58px;font-size:11.3px;line-height:13px;color:#1e1e1e;">Огрунтовка металлических поверхностей грунтовкой ГФ-021 за один раз</div>
<div class="t" style="left:652.5px;top:777.60px;font-size:11.1px;line-height:11.1px;color:#1e1e1e;">100 м2</div>
<div class="t" style="left:517px;width:400px;text-align:right;top:777.60px;font-size:11.1px;line-height:11.1px;color:#1e1e1e;">97,23</div>
<div class="t" style="left:657px;width:400px;text-align:right;top:777.60px;font-size:11.1px;line-height:11.1px;color:#1e1e1e;">74,13</div>
<div class="t" style="left:797px;width:400px;text-align:right;top:777.60px;font-size:11.1px;line-height:11.1px;color:#1e1e1e;">13,64</div>
<div class="t" style="left:961px;width:400px;text-align:right;top:777.60px;font-size:11.1px;line-height:11.1px;color:#1e1e1e;">0,30</div>
</div>
<div class="b" style="left:521px;top:226px;width:1px;height:40px;background:#d3caee;"></div>
<div class="b" style="left:1021px;top:226px;width:1px;height:40px;background:#d3caee;"></div>
<div class="b" style="left:1161px;top:226px;width:1px;height:40px;background:#d3caee;"></div>
<div class="b" style="left:1301px;top:226px;width:1px;height:40px;background:#d3caee;"></div>
<div class="b" style="left:1441px;top:226px;width:1px;height:40px;background:#d3caee;"></div>
<div class="b" style="left:1581px;top:226px;width:1px;height:40px;background:#d3caee;"></div>
<div class="b" style="left:381px;top:226px;width:1px;height:829px;background:#d3caee;"></div>
<div class="b" style="left:381px;top:1054px;width:1356px;height:1px;background:#d3caee;"></div>
<div class="b" style="left:1737px;top:159px;width:1px;height:897px;background:#d3caee;"></div>
<div class="b" style="left:1731px;top:273.5px;width:5.5px;height:93.5px;background:#a896d4;border-radius:3px;"></div>
<div class="b" style="left:1021.5px;top:1049px;width:581px;height:5.3px;background:#a896d4;border-radius:3px;"></div>
<div class="b" style="left:1738px;top:258px;width:21px;height:1px;background:#d3caee;"></div>
<div class="b" style="left:1737px;top:1055px;width:21px;height:1px;background:#d3caee;"></div>

<svg class="b" style="left:0;top:0" width="1759" height="1060"><circle cx="33.6" cy="33.5" r="17.6" fill="#4f2ba8"/><path d="M23.6 20.5 H38 L44.6 27 V45.6 H23.6 Z" fill="none" stroke="#ffffff" stroke-width="1.1" opacity="0.85"/><path d="M38 20.5 V27 H44.6 Z" fill="#ffffff" opacity="0.9"/><rect x="25.9" y="28" width="3" height="1.9" fill="#fff"/><rect x="29.9" y="28" width="3" height="1.9" fill="#fff"/><rect x="33.9" y="28" width="3" height="1.9" fill="#fff"/><rect x="37.9" y="28" width="3" height="1.9" fill="#fff"/><rect x="25.9" y="31" width="3" height="1.9" fill="#fff"/><rect x="29.9" y="31" width="3" height="1.9" fill="#fff"/><rect x="33.9" y="31" width="3" height="1.9" fill="#fff"/><rect x="37.9" y="31" width="3" height="1.9" fill="#fff"/><rect x="25.9" y="34" width="3" height="1.9" fill="#fff"/><rect x="29.9" y="34" width="3" height="1.9" fill="#fff"/><rect x="33.9" y="34" width="3" height="1.9" fill="#fff"/><rect x="37.9" y="34" width="3" height="1.9" fill="#fff"/><rect x="25.9" y="37" width="3" height="1.9" fill="#fff"/><rect x="29.9" y="37" width="3" height="1.9" fill="#fff"/><rect x="33.9" y="37" width="3" height="1.9" fill="#fff"/><rect x="37.9" y="37" width="3" height="1.9" fill="#fff"/><rect x="25.9" y="41" width="11" height="2" fill="#fff"/><rect x="37.9" y="41" width="3" height="2" fill="#fff"/><path d="M1065.7 118 H1074.9 L1070.3 123 Z" fill="#a3a3a3"/><path d="M1195 118 H1205 L1200.0 123 Z" fill="#444"/><path d="M241.3 76.2 V84.6 H249.2" fill="none" stroke="#9e9e9e" stroke-width="2"/><path d="M241.9 84 L249.6 76.3" stroke="#9e9e9e" stroke-width="2"/><path d="M249.3 76.6 Q250.3 75.2 251.6 75.2 A5.1 5.1 0 0 1 253.8 84.7" fill="none" stroke="#9e9e9e" stroke-width="2"/><path d="M256.2 99.2 V107.3 H248.6" fill="none" stroke="#9e9e9e" stroke-width="2"/><path d="M255.6 106.7 L248.3 99.3" stroke="#9e9e9e" stroke-width="2"/><path d="M248.6 99.6 Q247.8 98.2 246.4 98.2 A5.1 5.1 0 0 0 243.6 107.2" fill="none" stroke="#9e9e9e" stroke-width="2"/><rect x="243" y="118" width="12.2" height="1.5" rx="0.4" fill="#9e9e9e"/><rect x="246.3" y="116.8" width="5.6" height="1.6" rx="0.6" fill="#9e9e9e"/><path d="M244 120.5 H254.2 V130.7 Q254.2 132 253 132 H245.2 Q244 132 244 130.7 Z" fill="#9e9e9e"/><path d="M328 76 H338 L333.0 81 Z" fill="#a3a3a3"/><path d="M328 99 H338 L333.0 104 Z" fill="#a3a3a3"/><path d="M686 129 H695.5 L690.75 133.8 Z" fill="#a3a3a3"/><g transform="translate(28,81)"><path d="M0.5 1.5 Q0.5 0.5 1.5 0.5 H12 L17 5 V22 H1.5 Q0.5 22 0.5 21 Z" fill="#fff" stroke="#9e9e9e" stroke-width="1"/><rect x="3.2" y="8" width="7" height="1.8" fill="#9e9e9e"/><rect x="3.2" y="12" width="7" height="1.8" fill="#9e9e9e"/><rect x="3.2" y="16" width="7" height="1.8" fill="#9e9e9e"/><path d="M11.5 8 Q11.5 7 12.5 7 H24 L29.5 12 V30 Q29.5 31 28.5 31 H12.5 Q11.5 31 11.5 30 Z" fill="#fff" stroke="#9e9e9e" stroke-width="1.2"/><rect x="14.8" y="16" width="11.5" height="2" fill="#9e9e9e"/><rect x="14.8" y="20.5" width="11.5" height="2" fill="#9e9e9e"/><rect x="14.8" y="25" width="11.5" height="2" fill="#9e9e9e"/></g><g transform="translate(97.5,81)"><rect x="0" y="3.5" width="26.5" height="27.2" rx="2.2" fill="#9e9e9e"/><rect x="6.6" y="2.6" width="13.4" height="4.6" rx="1.6" fill="#fff"/><rect x="7.6" y="3.2" width="11.4" height="3.2" rx="1.2" fill="#9e9e9e"/><circle cx="13.3" cy="2.2" r="2" fill="#9e9e9e"/><circle cx="13.3" cy="2.2" r="0.8" fill="#fff"/><path d="M16.5 12 Q16.5 11.2 17.3 11.2 H26.5 L31.8 16 V30.4 Q31.8 31.4 30.8 31.4 H17.3 Q16.5 31.4 16.5 30.4 Z" fill="#fff" stroke="#9e9e9e" stroke-width="1.2"/><rect x="19.5" y="19.5" width="9.8" height="2" fill="#9e9e9e"/><rect x="19.5" y="23.5" width="9.8" height="2" fill="#9e9e9e"/><rect x="19.5" y="27.2" width="9.8" height="1.8" fill="#9e9e9e"/></g><path d="M173 80.8 L187 96.2 L187.8 97.6 L186.6 99.5 L188.6 102.6 L186.8 104 L182.2 99.6 Q176 90 173 80.8 Z" fill="#9e9e9e"/><path d="M195.8 81.2 Q193 89 188.6 95.8 L185.9 92.9 Z" fill="#9e9e9e"/><path d="M181 103.8 L183.3 101.3" stroke="#9e9e9e" stroke-width="1.8"/><ellipse cx="177.6" cy="107.4" rx="3.5" ry="4.8" fill="none" stroke="#9e9e9e" stroke-width="1.9" transform="rotate(32 177.6 107.4)"/><ellipse cx="191" cy="107.4" rx="3.5" ry="4.8" fill="none" stroke="#9e9e9e" stroke-width="1.9" transform="rotate(-32 191 107.4)"/><g transform="translate(379,82) scale(1.0)"><rect x="0.0" y="0" width="9.2" height="25.8" rx="2.3" fill="#4f2ba8"/><rect x="1.5" y="2.8" width="6.2" height="11.8" rx="0.8" fill="#fff"/><rect x="2.2" y="5.2" width="4.8" height="1.5" fill="#4a4a4a"/><rect x="2.2" y="8.2" width="4.8" height="1.5" fill="#4a4a4a"/><rect x="2.2" y="11.2" width="4.8" height="1.5" fill="#4a4a4a"/><circle cx="4.6" cy="20.4" r="2.7" fill="#f7e6b0"/><rect x="11.6" y="0" width="9.2" height="25.8" rx="2.3" fill="#e9c23a"/><rect x="13.1" y="2.8" width="6.2" height="11.8" rx="0.8" fill="#fff"/><rect x="13.8" y="5.2" width="4.8" height="1.5" fill="#4a4a4a"/><rect x="13.8" y="8.2" width="4.8" height="1.5" fill="#4a4a4a"/><rect x="13.8" y="11.2" width="4.8" height="1.5" fill="#4a4a4a"/><circle cx="16.2" cy="20.4" r="2.7" fill="#f7e6b0"/><rect x="23.2" y="0" width="9.2" height="25.8" rx="2.3" fill="#4f2ba8"/><rect x="24.7" y="2.8" width="6.2" height="11.8" rx="0.8" fill="#fff"/><rect x="25.4" y="5.2" width="4.8" height="1.5" fill="#4a4a4a"/><rect x="25.4" y="8.2" width="4.8" height="1.5" fill="#4a4a4a"/><rect x="25.4" y="11.2" width="4.8" height="1.5" fill="#4a4a4a"/><circle cx="27.799999999999997" cy="20.4" r="2.7" fill="#f7e6b0"/><rect x="0" y="27.4" width="32.4" height="3.4" fill="#e8b15c"/></g><g transform="translate(449.7,80.7) scale(1.0)"><path d="M9.5 5 V1.2 Q9.5 0.5 10.2 0.5 H22 Q22.7 0.5 22.7 1.2 V5" fill="none" stroke="#555" stroke-width="1.1"/><rect x="0" y="4.8" width="32.3" height="26.2" rx="2.6" fill="#4f2ba8"/><rect x="0" y="17.5" width="32.3" height="1.8" fill="#fff"/><rect x="12.2" y="13.3" width="7.8" height="11.4" rx="0.8" fill="#fff"/><rect x="13.3" y="14.4" width="5.6" height="9.2" fill="#e8b15c"/></g><g transform="translate(520.8,83) scale(1.0)"><path d="M0.6 1.2 Q0.6 0.6 1.2 0.6 H31 Q31.6 0.6 31.6 1.2 V25 H21 V26.5 Q21 27.8 19.7 27.8 H11.2 Q9.8 27.8 9.8 26.5 V28 H1.2 Q0.6 28 0.6 27.4 Z" fill="#fff" stroke="#555" stroke-width="1"/><path d="M0 1.2 Q0 0 1.2 0 H31 Q32.2 0 32.2 1.2 V4.6 H0 Z" fill="#4f2ba8"/><rect x="2.5" y="6.8" width="27.2" height="1" fill="#555"/><rect x="2.6" y="10.5" width="7.9" height="1.9" fill="#b9b9b9"/><rect x="12.2" y="10.5" width="7.9" height="1.9" fill="#b9b9b9"/><rect x="21.5" y="10.5" width="8.4" height="1.9" fill="#4f2ba8"/><rect x="2.6" y="14.3" width="7.9" height="1.9" fill="#b9b9b9"/><rect x="12.2" y="14.3" width="7.9" height="1.9" fill="#b9b9b9"/><rect x="21.5" y="14.3" width="8.4" height="1.9" fill="#4f2ba8"/><rect x="2.6" y="18" width="7.9" height="1.9" fill="#b9b9b9"/><rect x="12.2" y="18" width="7.9" height="1.9" fill="#b9b9b9"/><rect x="21.5" y="18" width="8.4" height="1.9" fill="#4f2ba8"/><path d="M11 28 V26 H20 V28" fill="none" stroke="#555" stroke-width="1"/></g><g transform="translate(604,81)"><path d="M0 2 Q0 0.5 1.5 0.5 H11 L14 3.5 H30.5 Q32 3.5 32 5 V28.5 Q32 30 30.5 30 H1.5 Q0 30 0 28.5 Z" fill="#9e9e9e"/><rect x="0" y="6.6" width="32" height="1.2" fill="#fff"/></g><g transform="translate(677.5,78)"><path d="M1 13 L13 1.5 L25 13" fill="none" stroke="#9e9e9e" stroke-width="1.6"/><path d="M4.5 11 V24.5 M21.5 11 V24.5 M4.5 9.5 L13 3.2 L21.5 9.5" fill="none" stroke="#9e9e9e" stroke-width="1.3"/><path d="M4.5 13.5 H21.5 M10 13.5 V24.5 M16 13.5 V24.5 M13 4 V13.5" fill="none" stroke="#9e9e9e" stroke-width="1"/><rect x="2" y="24.3" width="22" height="1.8" fill="#9e9e9e"/></g><rect x="765.1" y="81" width="5.8" height="4.7" fill="#e8b15c"/><rect x="776.9" y="81" width="5.8" height="4.7" fill="#e8b15c"/><path d="M763.20 87.10 L770.90 87.10 L770.90 99.80 L769.10 101.20 L769.10 111.00 L767.50 112.60 L759.60 112.60 L758.00 111.00 L758.20 104.00 L761.80 88.60 Z" fill="#4f2ba8" stroke="#4f2ba8" stroke-width="0.8" stroke-linejoin="round"/><path d="M784.70 87.10 L777.00 87.10 L777.00 99.80 L778.80 101.20 L778.80 111.00 L780.40 112.60 L788.30 112.60 L789.90 111.00 L789.70 104.00 L786.10 88.60 Z" fill="#4f2ba8" stroke="#4f2ba8" stroke-width="0.8" stroke-linejoin="round"/><rect x="772.4" y="89" width="3" height="8.9" rx="0.5" fill="#e8b15c"/><text x="829.2" y="93.6" font-family="Liberation Sans" font-weight="700" font-size="15.8" fill="#9e9e9e" stroke="#9e9e9e" stroke-width="0.7" textLength="17" lengthAdjust="spacingAndGlyphs">AB</text><text x="844" y="110.8" font-family="Liberation Sans" font-weight="700" font-size="16.2" fill="#9e9e9e" stroke="#9e9e9e" stroke-width="0.7" textLength="17.2" lengthAdjust="spacingAndGlyphs">AC</text><path d="M831.2 95.5 V101 Q831.2 104.5 834.5 104.5 H841.5" fill="none" stroke="#9e9e9e" stroke-width="2.3"/><path d="M838.2 100.6 L842 104.5 L838.2 108.4" fill="none" stroke="#9e9e9e" stroke-width="2.3"/><g transform="translate(918.8,81)"><rect x="0.5" y="0.5" width="9.5" height="11.5" rx="1" fill="#fff" stroke="#9e9e9e" stroke-width="1"/><rect x="2.3" y="3" width="6" height="1.2" fill="#9e9e9e"/><rect x="2.3" y="5.5" width="6" height="1.2" fill="#9e9e9e"/><rect x="2.3" y="8.5" width="6" height="1.2" fill="#9e9e9e"/><rect x="12.4" y="6.2" width="19.4" height="25.3" rx="1.8" fill="#fff" stroke="#9e9e9e" stroke-width="1.2"/><rect x="14.5" y="9.3" width="15" height="1.5" fill="#9e9e9e"/><rect x="14.5" y="27.5" width="15" height="1.5" fill="#9e9e9e"/><path d="M15 13.5 H29.5 V24 H15 M15 16.8 H29.5 M15 20.2 H29.5 M22.5 13.5 V24" fill="none" stroke="#9e9e9e" stroke-width="0.9"/><path d="M3 13.5 V17 Q3 20.3 6.3 20.3 H13" fill="none" stroke="#9e9e9e" stroke-width="2.2"/><path d="M9.5 16.5 L13.5 20.3 L9.5 24.2" fill="none" stroke="#9e9e9e" stroke-width="2.2"/></g><g transform="translate(1015,81)"><rect x="0.6" y="3.6" width="19.8" height="25.4" rx="1.5" fill="#fff" stroke="#9e9e9e" stroke-width="1.1"/><path d="M0 4.8 Q0 3 1.8 3 H19.2 Q21 3 21 4.8 V6.2 H0 Z" fill="#9e9e9e"/><rect x="2" y="8" width="7.6" height="7.6" rx="1" fill="#9e9e9e"/><rect x="11.4" y="8" width="7.6" height="7.6" rx="1" fill="#9e9e9e"/><rect x="2" y="17.6" width="7.6" height="8" rx="1" fill="#9e9e9e"/><rect x="11.4" y="17.6" width="7.6" height="8" rx="1" fill="#9e9e9e"/><path d="M23 1 H28.5 L31 3.5 V11 H23 Z" fill="#fff" stroke="#9e9e9e" stroke-width="0.9"/><path d="M24.5 5 H29.5 M24.5 7 H29.5 M24.5 9 H29.5" stroke="#9e9e9e" stroke-width="0.8"/><path d="M22 26.5 Q26.5 26.5 26.5 21 V15" fill="none" stroke="#9e9e9e" stroke-width="2.2"/><path d="M22.6 18.8 L26.5 14.5 L30.4 18.8" fill="none" stroke="#9e9e9e" stroke-width="2.2"/></g><g transform="translate(1127,81)"><rect x="0.6" y="0.6" width="24" height="30.8" rx="2.5" fill="#fff" stroke="#555" stroke-width="1.1"/><path d="M0 3 Q0 0 3 0 H22.2 Q25.2 0 25.2 3 V4.6 H0 Z" fill="#4f2ba8"/><path d="M2.5 11.8 Q2.5 11 3.3 11 H9 L12 14 V23.8 Q12 24.6 11.2 24.6 H3.3 Q2.5 24.6 2.5 23.8 Z" fill="#fff" stroke="#555" stroke-width="0.9"/><rect x="4.3" y="16.5" width="6" height="1.3" fill="#4f2ba8"/><rect x="4.3" y="19" width="6" height="1.3" fill="#4f2ba8"/><rect x="4.3" y="21.5" width="6" height="1.3" fill="#4f2ba8"/><path d="M13.7 11.8 Q13.7 11 14.5 11 H20.2 L23.2 14 V23.8 Q23.2 24.6 22.4 24.6 H14.5 Q13.7 24.6 13.7 23.8 Z" fill="#fff" stroke="#555" stroke-width="0.9"/><rect x="15.5" y="16.5" width="6" height="1.3" fill="#4f2ba8"/><rect x="15.5" y="19" width="6" height="1.3" fill="#4f2ba8"/><rect x="15.5" y="21.5" width="6" height="1.3" fill="#4f2ba8"/><path d="M26.3 1.2 Q26.3 0.2 27.3 0.2 H31 L32.3 1.6 H38.2 Q39.2 1.6 39.2 2.6 V11.2 Q39.2 12.2 38.2 12.2 H27.3 Q26.3 12.2 26.3 11.2 Z" fill="#e8b15c"/><path d="M26.3 4.5 H39.2" stroke="#b98a3a" stroke-width="0.5"/><path d="M27 6.5 H38.5" stroke="#8a6a2a" stroke-width="0.7" stroke-dasharray="1 1"/><path d="M26.5 29 Q32.8 29 32.8 22 V17" fill="none" stroke="#4f2ba8" stroke-width="2.6"/><path d="M28 20.5 L32.8 15.5 L37.6 20.5" fill="none" stroke="#4f2ba8" stroke-width="2.6"/></g><g transform="translate(1258,96.8) rotate(45)"><path d="M0 -22.4 Q4.8 -19.6 4.8 -15.2 H-4.8 Q-4.8 -19.6 0 -22.4 Z" fill="#4f2ba8"/><path d="M-5 -14.2 H5 Q6.3 -9 5.5 -4 H-5.5 Q-6.3 -9 -5 -14.2 Z" fill="#e8b15c"/><circle cx="0.2" cy="-9" r="2.5" fill="#fff"/><path d="M-5.3 -3.1 H5.3 L5.2 1.5 L9.4 11.6 L5.4 9.2 Q3 11.8 0 12.2 Q-3 11.8 -5.4 9.2 L-9.4 11.6 L-5.2 1.5 Z" fill="#4f2ba8"/><path d="M-4.2 13.4 Q-2.2 19 0 22.4 Q2.2 19 3.8 12.5 L2.4 13.4 Q1.2 17.4 0 19.2 Q-1.2 17.4 -2.8 13.8 Z" fill="#4f2ba8"/></g><g transform="translate(1313,83)"><path d="M3.8 11.5 Q3.5 6 8 4.5 Q11 3.5 15.5 5.5 Q21 8 24.5 5.5 Q26.5 4 27.5 0.3" fill="none" stroke="#9e9e9e" stroke-width="0.9"/><rect x="0.5" y="11.5" width="30.5" height="15.8" rx="2" fill="#fff" stroke="#9e9e9e" stroke-width="1"/><rect x="3.0" y="14.5" width="1.6" height="1.3" fill="#9e9e9e"/><rect x="6.3" y="14.5" width="1.6" height="1.3" fill="#9e9e9e"/><rect x="9.6" y="14.5" width="1.6" height="1.3" fill="#9e9e9e"/><rect x="12.899999999999999" y="14.5" width="1.6" height="1.3" fill="#9e9e9e"/><rect x="16.2" y="14.5" width="1.6" height="1.3" fill="#9e9e9e"/><rect x="19.5" y="14.5" width="1.6" height="1.3" fill="#9e9e9e"/><rect x="22.799999999999997" y="14.5" width="1.6" height="1.3" fill="#9e9e9e"/><rect x="27" y="14.5" width="1.6" height="1.3" fill="#9e9e9e"/><rect x="3.0" y="17.5" width="1.6" height="1.3" fill="#9e9e9e"/><rect x="6.3" y="17.5" width="1.6" height="1.3" fill="#9e9e9e"/><rect x="9.6" y="17.5" width="1.6" height="1.3" fill="#9e9e9e"/><rect x="12.899999999999999" y="17.5" width="1.6" height="1.3" fill="#9e9e9e"/><rect x="16.2" y="17.5" width="1.6" height="1.3" fill="#9e9e9e"/><rect x="19.5" y="17.5" width="1.6" height="1.3" fill="#9e9e9e"/><rect x="22.799999999999997" y="17.5" width="1.6" height="1.3" fill="#9e9e9e"/><rect x="27" y="17.5" width="1.6" height="1.3" fill="#9e9e9e"/><rect x="3.0" y="20.5" width="1.6" height="1.3" fill="#9e9e9e"/><rect x="6.3" y="20.5" width="1.6" height="1.3" fill="#9e9e9e"/><rect x="9.6" y="20.5" width="1.6" height="1.3" fill="#9e9e9e"/><rect x="12.899999999999999" y="20.5" width="1.6" height="1.3" fill="#9e9e9e"/><rect x="16.2" y="20.5" width="1.6" height="1.3" fill="#9e9e9e"/><rect x="19.5" y="20.5" width="1.6" height="1.3" fill="#9e9e9e"/><rect x="22.799999999999997" y="20.5" width="1.6" height="1.3" fill="#9e9e9e"/><rect x="27" y="20.5" width="1.6" height="1.3" fill="#9e9e9e"/><rect x="9" y="23.5" width="12" height="1.4" fill="#9e9e9e"/><rect x="3" y="23.5" width="1.6" height="1.3" fill="#9e9e9e"/><rect x="25" y="23.5" width="4" height="1.3" fill="#9e9e9e"/></g><g transform="translate(5,164) scale(0.81)"><rect x="0.0" y="0" width="9.2" height="25.8" rx="2.3" fill="#4f2ba8"/><rect x="1.5" y="2.8" width="6.2" height="11.8" rx="0.8" fill="#fff"/><rect x="2.2" y="5.2" width="4.8" height="1.5" fill="#4a4a4a"/><rect x="2.2" y="8.2" width="4.8" height="1.5" fill="#4a4a4a"/><rect x="2.2" y="11.2" width="4.8" height="1.5" fill="#4a4a4a"/><circle cx="4.6" cy="20.4" r="2.7" fill="#f7e6b0"/><rect x="11.6" y="0" width="9.2" height="25.8" rx="2.3" fill="#e9c23a"/><rect x="13.1" y="2.8" width="6.2" height="11.8" rx="0.8" fill="#fff"/><rect x="13.8" y="5.2" width="4.8" height="1.5" fill="#4a4a4a"/><rect x="13.8" y="8.2" width="4.8" height="1.5" fill="#4a4a4a"/><rect x="13.8" y="11.2" width="4.8" height="1.5" fill="#4a4a4a"/><circle cx="16.2" cy="20.4" r="2.7" fill="#f7e6b0"/><rect x="23.2" y="0" width="9.2" height="25.8" rx="2.3" fill="#4f2ba8"/><rect x="24.7" y="2.8" width="6.2" height="11.8" rx="0.8" fill="#fff"/><rect x="25.4" y="5.2" width="4.8" height="1.5" fill="#4a4a4a"/><rect x="25.4" y="8.2" width="4.8" height="1.5" fill="#4a4a4a"/><rect x="25.4" y="11.2" width="4.8" height="1.5" fill="#4a4a4a"/><circle cx="27.799999999999997" cy="20.4" r="2.7" fill="#f7e6b0"/><rect x="0" y="27.4" width="32.4" height="3.4" fill="#e8b15c"/></g><g transform="translate(5,195) scale(0.81)"><path d="M9.5 5 V1.2 Q9.5 0.5 10.2 0.5 H22 Q22.7 0.5 22.7 1.2 V5" fill="none" stroke="#555" stroke-width="1.1"/><rect x="0" y="4.8" width="32.3" height="26.2" rx="2.6" fill="#4f2ba8"/><rect x="0" y="17.5" width="32.3" height="1.8" fill="#fff"/><rect x="12.2" y="13.3" width="7.8" height="11.4" rx="0.8" fill="#fff"/><rect x="13.3" y="14.4" width="5.6" height="9.2" fill="#e8b15c"/></g><g transform="translate(5,229) scale(0.81)"><path d="M0.6 1.2 Q0.6 0.6 1.2 0.6 H31 Q31.6 0.6 31.6 1.2 V25 H21 V26.5 Q21 27.8 19.7 27.8 H11.2 Q9.8 27.8 9.8 26.5 V28 H1.2 Q0.6 28 0.6 27.4 Z" fill="#fff" stroke="#555" stroke-width="1"/><path d="M0 1.2 Q0 0 1.2 0 H31 Q32.2 0 32.2 1.2 V4.6 H0 Z" fill="#4f2ba8"/><rect x="2.5" y="6.8" width="27.2" height="1" fill="#555"/><rect x="2.6" y="10.5" width="7.9" height="1.9" fill="#b9b9b9"/><rect x="12.2" y="10.5" width="7.9" height="1.9" fill="#b9b9b9"/><rect x="21.5" y="10.5" width="8.4" height="1.9" fill="#4f2ba8"/><rect x="2.6" y="14.3" width="7.9" height="1.9" fill="#b9b9b9"/><rect x="12.2" y="14.3" width="7.9" height="1.9" fill="#b9b9b9"/><rect x="21.5" y="14.3" width="8.4" height="1.9" fill="#4f2ba8"/><rect x="2.6" y="18" width="7.9" height="1.9" fill="#b9b9b9"/><rect x="12.2" y="18" width="7.9" height="1.9" fill="#b9b9b9"/><rect x="21.5" y="18" width="8.4" height="1.9" fill="#4f2ba8"/><path d="M11 28 V26 H20 V28" fill="none" stroke="#555" stroke-width="1"/></g><g transform="translate(52.9,177)"><path d="M0.2 5.6 Q7.6 -2.2 15.2 5.6 Q7.6 13.4 0.2 5.6 Z" fill="#a2a2a2"/><circle cx="7.6" cy="5.9" r="3.3" fill="#fff"/><circle cx="7.6" cy="5.9" r="1.9" fill="#a2a2a2"/><path d="M1.8 -0.4 L13.6 11.6" stroke="#fff" stroke-width="2.6"/><path d="M1.8 -0.4 L13.6 11.6" stroke="#a2a2a2" stroke-width="1.4"/></g><g transform="translate(120,175.5)"><path d="M0.5 0 V15 M0.5 5 H3.5 M0.5 10 H3.5 M0.5 15 H3.5" stroke="#4f2ba8" stroke-width="1"/><rect x="3.8" y="1" width="6" height="4" fill="none" stroke="#4f2ba8" stroke-width="1"/><rect x="3.8" y="6.5" width="6" height="4.5" fill="none" stroke="#4f2ba8" stroke-width="1"/><rect x="4" y="11.5" width="6" height="5" fill="#4f2ba8"/><rect x="5.5" y="2.3" width="3" height="1.6" fill="#4f2ba8"/><rect x="5.5" y="7.8" width="3" height="1.8" fill="#4f2ba8"/></g><path d="M147.2 180.7 H157.5 L152.35 186.6 Z" fill="#8a8a8a"/><path d="M71.6 223.0 L75 226.4 L78.4 223.0" fill="none" stroke="#1a1a1a" stroke-width="1.7"/><g transform="translate(100.6,213)"><rect x="0.0" y="0" width="5.3" height="14.5" fill="#4f2ba8"/><rect x="0.7" y="2" width="3.9" height="6.5" fill="#d6d6d6"/><rect x="0.7" y="3" width="3.9" height="1.5" fill="#6a6a6a"/><rect x="0.7" y="5.8" width="3.9" height="1.5" fill="#6a6a6a"/><rect x="1.6" y="10.6" width="2.2" height="2" fill="#fff"/><rect x="5.75" y="0" width="5.3" height="14.5" fill="#e9c23a"/><rect x="6.45" y="2" width="3.9" height="6.5" fill="#d6d6d6"/><rect x="6.45" y="3" width="3.9" height="1.5" fill="#6a6a6a"/><rect x="6.45" y="5.8" width="3.9" height="1.5" fill="#6a6a6a"/><rect x="7.35" y="10.6" width="2.2" height="2" fill="#fff"/><rect x="11.5" y="0" width="5.3" height="14.5" fill="#4f2ba8"/><rect x="12.2" y="2" width="3.9" height="6.5" fill="#d6d6d6"/><rect x="12.2" y="3" width="3.9" height="1.5" fill="#6a6a6a"/><rect x="12.2" y="5.8" width="3.9" height="1.5" fill="#6a6a6a"/><rect x="13.1" y="10.6" width="2.2" height="2" fill="#fff"/><rect x="-0.3" y="15.4" width="17.5" height="2" fill="#e8b15c"/></g><path d="M89.6 258.5 L93 261.9 L96.4 258.5" fill="none" stroke="#1a1a1a" stroke-width="1.7"/><g transform="translate(118.9,248)"><rect x="0" y="0" width="15.3" height="17.9" rx="0.8" fill="#4f2ba8"/><rect x="1.6" y="3.4" width="12.4" height="6.4" rx="0.6" fill="#fff"/><rect x="2.8" y="4.7" width="10" height="1.4" fill="#999"/><rect x="2.8" y="7.3" width="10" height="1.4" fill="#999"/><rect x="1.6" y="1" width="1.5" height="1.2" fill="#fff"/><rect x="2.3" y="13.8" width="3.3" height="1.3" fill="#fff"/></g><path d="M107.6 293.0 L111 296.4 L114.4 293.0" fill="none" stroke="#1a1a1a" stroke-width="1.7"/><g transform="translate(137,283.3)"><rect x="0" y="0" width="15.3" height="17.4" rx="2" fill="#4f2ba8"/><rect x="3.4" y="1.5" width="10.6" height="14.5" rx="0.5" fill="#fff"/><rect x="4.6" y="3.4" width="8.3" height="1.3" fill="#9a9a9a"/><rect x="4.6" y="6.2" width="8.3" height="1.3" fill="#9a9a9a"/><rect x="4.6" y="9" width="8.3" height="1.3" fill="#9a9a9a"/><rect x="4.6" y="12.8" width="8.3" height="1.2" fill="#c9c0e6"/></g><path d="M126.1 325.90000000000003 L129.9 329.3 L126.1 332.7" fill="none" stroke="#1a1a1a" stroke-width="1.7"/><g transform="translate(154.5,318)"><rect x="0.5" y="0.5" width="16" height="16.3" rx="1" fill="#fff" stroke="#c4c4c4" stroke-width="1"/><path d="M2.3 2.3 V14.8 H14.8" fill="none" stroke="#222" stroke-width="1"/><path d="M3.8 12.5 L6.8 8.2 L8.2 10.3 L11.2 5.8 L12.2 7.2 L14.3 3.7" fill="none" stroke="#4f2ba8" stroke-width="1.6"/><path d="M3.6 13.2 L7 9.6 L8.6 11.5 L11.4 7.5 L12.4 8.6 L14.4 5.6" fill="none" stroke="#a58fd9" stroke-width="1"/></g><path d="M126.1 368.6 L129.9 372 L126.1 375.4" fill="none" stroke="#1a1a1a" stroke-width="1.7"/><g transform="translate(154,351.2)"><path d="M0 1.2 Q0 0 1.2 0 H6 L8.6 2 H16.8 Q18 2 18 3.2 V3.8 H0 Z" fill="#9c7a2c"/><path d="M0 4.6 H18 V15.4 Q18 16.6 16.8 16.6 H1.2 Q0 16.6 0 15.4 Z" fill="#e6b260"/></g><path d="M126.1 418.6 L129.9 422 L126.1 425.4" fill="none" stroke="#1a1a1a" stroke-width="1.7"/><g transform="translate(154,401.2)"><path d="M0 1.2 Q0 0 1.2 0 H6 L8.6 2 H16.8 Q18 2 18 3.2 V3.8 H0 Z" fill="#9c7a2c"/><path d="M0 4.6 H18 V15.4 Q18 16.6 16.8 16.6 H1.2 Q0 16.6 0 15.4 Z" fill="#e6b260"/></g><path d="M125.1 465.1 L128.5 468.5 L131.9 465.1" fill="none" stroke="#1a1a1a" stroke-width="1.7"/><g transform="translate(154,451.2)"><path d="M0 1.2 Q0 0 1.2 0 H6 L8.6 2 H16.8 Q18 2 18 3.2 V3.8 H0 Z" fill="#9c7a2c"/><path d="M0 4.6 H18 V15.4 Q18 16.6 16.8 16.6 H1.2 Q0 16.6 0 15.4 Z" fill="#e6b260"/></g><g transform="translate(173.2,489.2)"><rect x="0.5" y="0.5" width="14.4" height="16.5" rx="0.8" fill="#fff" stroke="#b2b2b2" stroke-width="1"/><rect x="2" y="2" width="11.2" height="1.5" fill="#bdbdbd"/><rect x="2" y="4.7" width="11.2" height="8.6" rx="1" fill="#9b86d6"/><rect x="2.6" y="6.3" width="6.8" height="0.9" fill="#fff"/><rect x="2.6" y="8.3" width="6.8" height="0.9" fill="#fff"/><rect x="2.6" y="10.3" width="6.8" height="0.9" fill="#fff"/><rect x="10.2" y="6.3" width="2.4" height="0.9" fill="#fff"/><rect x="10.2" y="8.3" width="2.4" height="0.9" fill="#fff"/><rect x="10.2" y="10.3" width="2.4" height="0.9" fill="#fff"/><rect x="9.5" y="5" width="0.6" height="8" fill="#4f2ba8"/><rect x="2.8" y="15" width="3.6" height="0.7" fill="#c9c9c9"/><rect x="9" y="15" width="3.6" height="0.7" fill="#c9c9c9"/></g><g transform="translate(173.2,522)"><rect x="0.5" y="0.5" width="14.4" height="16.5" rx="0.8" fill="#fff" stroke="#b2b2b2" stroke-width="1"/><rect x="2" y="2" width="11.2" height="1.5" fill="#bdbdbd"/><rect x="2" y="4.7" width="11.2" height="8.6" rx="1" fill="#9b86d6"/><rect x="2.6" y="6.3" width="6.8" height="0.9" fill="#fff"/><rect x="2.6" y="8.3" width="6.8" height="0.9" fill="#fff"/><rect x="2.6" y="10.3" width="6.8" height="0.9" fill="#fff"/><rect x="10.2" y="6.3" width="2.4" height="0.9" fill="#fff"/><rect x="10.2" y="8.3" width="2.4" height="0.9" fill="#fff"/><rect x="10.2" y="10.3" width="2.4" height="0.9" fill="#fff"/><rect x="9.5" y="5" width="0.6" height="8" fill="#4f2ba8"/><rect x="2.8" y="15" width="3.6" height="0.7" fill="#c9c9c9"/><rect x="9" y="15" width="3.6" height="0.7" fill="#c9c9c9"/></g><g transform="translate(173.2,561.5)"><rect x="0.5" y="0.5" width="14.4" height="16.5" rx="0.8" fill="#fff" stroke="#b2b2b2" stroke-width="1"/><rect x="2" y="2" width="11.2" height="1.5" fill="#bdbdbd"/><rect x="2" y="4.7" width="11.2" height="8.6" rx="1" fill="#9b86d6"/><rect x="2.6" y="6.3" width="6.8" height="0.9" fill="#fff"/><rect x="2.6" y="8.3" width="6.8" height="0.9" fill="#fff"/><rect x="2.6" y="10.3" width="6.8" height="0.9" fill="#fff"/><rect x="10.2" y="6.3" width="2.4" height="0.9" fill="#fff"/><rect x="10.2" y="8.3" width="2.4" height="0.9" fill="#fff"/><rect x="10.2" y="10.3" width="2.4" height="0.9" fill="#fff"/><rect x="9.5" y="5" width="0.6" height="8" fill="#4f2ba8"/><rect x="2.8" y="15" width="3.6" height="0.7" fill="#c9c9c9"/><rect x="9" y="15" width="3.6" height="0.7" fill="#c9c9c9"/></g><g transform="translate(173.2,594)"><rect x="0.5" y="0.5" width="14.4" height="16.5" rx="0.8" fill="#fff" stroke="#b2b2b2" stroke-width="1"/><rect x="2" y="2" width="11.2" height="1.5" fill="#bdbdbd"/><rect x="2" y="4.7" width="11.2" height="8.6" rx="1" fill="#9b86d6"/><rect x="2.6" y="6.3" width="6.8" height="0.9" fill="#fff"/><rect x="2.6" y="8.3" width="6.8" height="0.9" fill="#fff"/><rect x="2.6" y="10.3" width="6.8" height="0.9" fill="#fff"/><rect x="10.2" y="6.3" width="2.4" height="0.9" fill="#fff"/><rect x="10.2" y="8.3" width="2.4" height="0.9" fill="#fff"/><rect x="10.2" y="10.3" width="2.4" height="0.9" fill="#fff"/><rect x="9.5" y="5" width="0.6" height="8" fill="#4f2ba8"/><rect x="2.8" y="15" width="3.6" height="0.7" fill="#c9c9c9"/><rect x="9" y="15" width="3.6" height="0.7" fill="#c9c9c9"/></g><g transform="translate(173.2,630)"><rect x="0.5" y="0.5" width="14.4" height="16.5" rx="0.8" fill="#fff" stroke="#b2b2b2" stroke-width="1"/><rect x="2" y="2" width="11.2" height="1.5" fill="#bdbdbd"/><rect x="2" y="4.7" width="11.2" height="8.6" rx="1" fill="#9b86d6"/><rect x="2.6" y="6.3" width="6.8" height="0.9" fill="#fff"/><rect x="2.6" y="8.3" width="6.8" height="0.9" fill="#fff"/><rect x="2.6" y="10.3" width="6.8" height="0.9" fill="#fff"/><rect x="10.2" y="6.3" width="2.4" height="0.9" fill="#fff"/><rect x="10.2" y="8.3" width="2.4" height="0.9" fill="#fff"/><rect x="10.2" y="10.3" width="2.4" height="0.9" fill="#fff"/><rect x="9.5" y="5" width="0.6" height="8" fill="#4f2ba8"/><rect x="2.8" y="15" width="3.6" height="0.7" fill="#c9c9c9"/><rect x="9" y="15" width="3.6" height="0.7" fill="#c9c9c9"/></g><g transform="translate(173.2,680)"><rect x="0.5" y="0.5" width="14.4" height="16.5" rx="0.8" fill="#fff" stroke="#b2b2b2" stroke-width="1"/><rect x="2" y="2" width="11.2" height="1.5" fill="#bdbdbd"/><rect x="2" y="4.7" width="11.2" height="8.6" rx="1" fill="#9b86d6"/><rect x="2.6" y="6.3" width="6.8" height="0.9" fill="#fff"/><rect x="2.6" y="8.3" width="6.8" height="0.9" fill="#fff"/><rect x="2.6" y="10.3" width="6.8" height="0.9" fill="#fff"/><rect x="10.2" y="6.3" width="2.4" height="0.9" fill="#fff"/><rect x="10.2" y="8.3" width="2.4" height="0.9" fill="#fff"/><rect x="10.2" y="10.3" width="2.4" height="0.9" fill="#fff"/><rect x="9.5" y="5" width="0.6" height="8" fill="#4f2ba8"/><rect x="2.8" y="15" width="3.6" height="0.7" fill="#c9c9c9"/><rect x="9" y="15" width="3.6" height="0.7" fill="#c9c9c9"/></g><g transform="translate(173.2,730)"><rect x="0.5" y="0.5" width="14.4" height="16.5" rx="0.8" fill="#fff" stroke="#b2b2b2" stroke-width="1"/><rect x="2" y="2" width="11.2" height="1.5" fill="#bdbdbd"/><rect x="2" y="4.7" width="11.2" height="8.6" rx="1" fill="#9b86d6"/><rect x="2.6" y="6.3" width="6.8" height="0.9" fill="#fff"/><rect x="2.6" y="8.3" width="6.8" height="0.9" fill="#fff"/><rect x="2.6" y="10.3" width="6.8" height="0.9" fill="#fff"/><rect x="10.2" y="6.3" width="2.4" height="0.9" fill="#fff"/><rect x="10.2" y="8.3" width="2.4" height="0.9" fill="#fff"/><rect x="10.2" y="10.3" width="2.4" height="0.9" fill="#fff"/><rect x="9.5" y="5" width="0.6" height="8" fill="#4f2ba8"/><rect x="2.8" y="15" width="3.6" height="0.7" fill="#c9c9c9"/><rect x="9" y="15" width="3.6" height="0.7" fill="#c9c9c9"/></g><g transform="translate(173.2,766)"><rect x="0.5" y="0.5" width="14.4" height="16.5" rx="0.8" fill="#fff" stroke="#b2b2b2" stroke-width="1"/><rect x="2" y="2" width="11.2" height="1.5" fill="#bdbdbd"/><rect x="2" y="4.7" width="11.2" height="8.6" rx="1" fill="#9b86d6"/><rect x="2.6" y="6.3" width="6.8" height="0.9" fill="#fff"/><rect x="2.6" y="8.3" width="6.8" height="0.9" fill="#fff"/><rect x="2.6" y="10.3" width="6.8" height="0.9" fill="#fff"/><rect x="10.2" y="6.3" width="2.4" height="0.9" fill="#fff"/><rect x="10.2" y="8.3" width="2.4" height="0.9" fill="#fff"/><rect x="10.2" y="10.3" width="2.4" height="0.9" fill="#fff"/><rect x="9.5" y="5" width="0.6" height="8" fill="#4f2ba8"/><rect x="2.8" y="15" width="3.6" height="0.7" fill="#c9c9c9"/><rect x="9" y="15" width="3.6" height="0.7" fill="#c9c9c9"/></g><g transform="translate(173.2,802)"><rect x="0.5" y="0.5" width="14.4" height="16.5" rx="0.8" fill="#fff" stroke="#b2b2b2" stroke-width="1"/><rect x="2" y="2" width="11.2" height="1.5" fill="#bdbdbd"/><rect x="2" y="4.7" width="11.2" height="8.6" rx="1" fill="#9b86d6"/><rect x="2.6" y="6.3" width="6.8" height="0.9" fill="#fff"/><rect x="2.6" y="8.3" width="6.8" height="0.9" fill="#fff"/><rect x="2.6" y="10.3" width="6.8" height="0.9" fill="#fff"/><rect x="10.2" y="6.3" width="2.4" height="0.9" fill="#fff"/><rect x="10.2" y="8.3" width="2.4" height="0.9" fill="#fff"/><rect x="10.2" y="10.3" width="2.4" height="0.9" fill="#fff"/><rect x="9.5" y="5" width="0.6" height="8" fill="#4f2ba8"/><rect x="2.8" y="15" width="3.6" height="0.7" fill="#c9c9c9"/><rect x="9" y="15" width="3.6" height="0.7" fill="#c9c9c9"/></g><g transform="translate(173.2,855.5)"><rect x="0.5" y="0.5" width="14.4" height="16.5" rx="0.8" fill="#fff" stroke="#b2b2b2" stroke-width="1"/><rect x="2" y="2" width="11.2" height="1.5" fill="#bdbdbd"/><rect x="2" y="4.7" width="11.2" height="8.6" rx="1" fill="#9b86d6"/><rect x="2.6" y="6.3" width="6.8" height="0.9" fill="#fff"/><rect x="2.6" y="8.3" width="6.8" height="0.9" fill="#fff"/><rect x="2.6" y="10.3" width="6.8" height="0.9" fill="#fff"/><rect x="10.2" y="6.3" width="2.4" height="0.9" fill="#fff"/><rect x="10.2" y="8.3" width="2.4" height="0.9" fill="#fff"/><rect x="10.2" y="10.3" width="2.4" height="0.9" fill="#fff"/><rect x="9.5" y="5" width="0.6" height="8" fill="#4f2ba8"/><rect x="2.8" y="15" width="3.6" height="0.7" fill="#c9c9c9"/><rect x="9" y="15" width="3.6" height="0.7" fill="#c9c9c9"/></g><g transform="translate(173.2,891.5)"><rect x="0.5" y="0.5" width="14.4" height="16.5" rx="0.8" fill="#fff" stroke="#b2b2b2" stroke-width="1"/><rect x="2" y="2" width="11.2" height="1.5" fill="#bdbdbd"/><rect x="2" y="4.7" width="11.2" height="8.6" rx="1" fill="#9b86d6"/><rect x="2.6" y="6.3" width="6.8" height="0.9" fill="#fff"/><rect x="2.6" y="8.3" width="6.8" height="0.9" fill="#fff"/><rect x="2.6" y="10.3" width="6.8" height="0.9" fill="#fff"/><rect x="10.2" y="6.3" width="2.4" height="0.9" fill="#fff"/><rect x="10.2" y="8.3" width="2.4" height="0.9" fill="#fff"/><rect x="10.2" y="10.3" width="2.4" height="0.9" fill="#fff"/><rect x="9.5" y="5" width="0.6" height="8" fill="#4f2ba8"/><rect x="2.8" y="15" width="3.6" height="0.7" fill="#c9c9c9"/><rect x="9" y="15" width="3.6" height="0.7" fill="#c9c9c9"/></g><g transform="translate(173.2,923.9)"><rect x="0.5" y="0.5" width="14.4" height="16.5" rx="0.8" fill="#fff" stroke="#b2b2b2" stroke-width="1"/><rect x="2" y="2" width="11.2" height="1.5" fill="#bdbdbd"/><rect x="2" y="4.7" width="11.2" height="8.6" rx="1" fill="#9b86d6"/><rect x="2.6" y="6.3" width="6.8" height="0.9" fill="#fff"/><rect x="2.6" y="8.3" width="6.8" height="0.9" fill="#fff"/><rect x="2.6" y="10.3" width="6.8" height="0.9" fill="#fff"/><rect x="10.2" y="6.3" width="2.4" height="0.9" fill="#fff"/><rect x="10.2" y="8.3" width="2.4" height="0.9" fill="#fff"/><rect x="10.2" y="10.3" width="2.4" height="0.9" fill="#fff"/><rect x="9.5" y="5" width="0.6" height="8" fill="#4f2ba8"/><rect x="2.8" y="15" width="3.6" height="0.7" fill="#c9c9c9"/><rect x="9" y="15" width="3.6" height="0.7" fill="#c9c9c9"/></g><g transform="translate(173.2,974)"><rect x="0.5" y="0.5" width="14.4" height="16.5" rx="0.8" fill="#fff" stroke="#b2b2b2" stroke-width="1"/><rect x="2" y="2" width="11.2" height="1.5" fill="#bdbdbd"/><rect x="2" y="4.7" width="11.2" height="8.6" rx="1" fill="#9b86d6"/><rect x="2.6" y="6.3" width="6.8" height="0.9" fill="#fff"/><rect x="2.6" y="8.3" width="6.8" height="0.9" fill="#fff"/><rect x="2.6" y="10.3" width="6.8" height="0.9" fill="#fff"/><rect x="10.2" y="6.3" width="2.4" height="0.9" fill="#fff"/><rect x="10.2" y="8.3" width="2.4" height="0.9" fill="#fff"/><rect x="10.2" y="10.3" width="2.4" height="0.9" fill="#fff"/><rect x="9.5" y="5" width="0.6" height="8" fill="#4f2ba8"/><rect x="2.8" y="15" width="3.6" height="0.7" fill="#c9c9c9"/><rect x="9" y="15" width="3.6" height="0.7" fill="#c9c9c9"/></g><g transform="translate(173.2,1010)"><rect x="0.5" y="0.5" width="14.4" height="16.5" rx="0.8" fill="#fff" stroke="#b2b2b2" stroke-width="1"/><rect x="2" y="2" width="11.2" height="1.5" fill="#bdbdbd"/><rect x="2" y="4.7" width="11.2" height="8.6" rx="1" fill="#9b86d6"/><rect x="2.6" y="6.3" width="6.8" height="0.9" fill="#fff"/><rect x="2.6" y="8.3" width="6.8" height="0.9" fill="#fff"/><rect x="2.6" y="10.3" width="6.8" height="0.9" fill="#fff"/><rect x="10.2" y="6.3" width="2.4" height="0.9" fill="#fff"/><rect x="10.2" y="8.3" width="2.4" height="0.9" fill="#fff"/><rect x="10.2" y="10.3" width="2.4" height="0.9" fill="#fff"/><rect x="9.5" y="5" width="0.6" height="8" fill="#4f2ba8"/><rect x="2.8" y="15" width="3.6" height="0.7" fill="#c9c9c9"/><rect x="9" y="15" width="3.6" height="0.7" fill="#c9c9c9"/></g><g transform="translate(173.2,1042.5)"><rect x="0.5" y="0.5" width="14.4" height="16.5" rx="0.8" fill="#fff" stroke="#b2b2b2" stroke-width="1"/><rect x="2" y="2" width="11.2" height="1.5" fill="#bdbdbd"/><rect x="2" y="4.7" width="11.2" height="8.6" rx="1" fill="#9b86d6"/><rect x="2.6" y="6.3" width="6.8" height="0.9" fill="#fff"/><rect x="2.6" y="8.3" width="6.8" height="0.9" fill="#fff"/><rect x="2.6" y="10.3" width="6.8" height="0.9" fill="#fff"/><rect x="10.2" y="6.3" width="2.4" height="0.9" fill="#fff"/><rect x="10.2" y="8.3" width="2.4" height="0.9" fill="#fff"/><rect x="10.2" y="10.3" width="2.4" height="0.9" fill="#fff"/><rect x="9.5" y="5" width="0.6" height="8" fill="#4f2ba8"/><rect x="2.8" y="15" width="3.6" height="0.7" fill="#c9c9c9"/><rect x="9" y="15" width="3.6" height="0.7" fill="#c9c9c9"/></g><path d="M442.6 201.5 H448.5 L450.5 203.5 V211.3 H442.6 Z" fill="#fff" stroke="#b5b5b5" stroke-width="0.6"/><path d="M444 205.4 H447.6 M444 207.5 H446.5 M444 209.3 H446" stroke="#4f2ba8" stroke-width="0.9"/><path d="M447.2 206.6 H450 V213.3 Q450 214 449 214 H446.9 Q446.2 214 446.3 213 Z M452 206.6 H455 Q455.6 210 455.6 213 Q455.6 214 454.8 214 H452.8 Q452 214 452 213.3 Z" fill="#4f2ba8"/><rect x="448.3" y="204.8" width="1.6" height="1.4" fill="#e8b15c"/><rect x="452.2" y="204.8" width="1.6" height="1.4" fill="#e8b15c"/><rect x="450" y="207.5" width="2" height="3" fill="#edd3a5"/><path d="M891.5 204 L898.5 211 M898.5 204 L891.5 211" stroke="#b5b5b5" stroke-width="1.4"/><circle cx="918.5" cy="206" r="4.1" fill="none" stroke="#4f2ba8" stroke-width="1.6"/><path d="M921.5 209 L925 212.5" stroke="#4f2ba8" stroke-width="1.8"/><path d="M1144.6 241 H1155.6 L1151.1999999999998 246.5 V252 L1149.0 252 V246.5 Z" fill="#4f2ba8"/><path d="M1285.8 241 V250.5" stroke="#4f2ba8" stroke-width="1.5"/><path d="M1283.6 248 L1285.8 251.8 L1288.0 248 Z" fill="#4f2ba8"/><path d="M1292.0 252 V242.5" stroke="#4f2ba8" stroke-width="1.5"/><path d="M1289.8 245 L1292.0 241.2 L1294.1999999999998 245 Z" fill="#4f2ba8"/><path d="M1425.8 241 V250.5" stroke="#4f2ba8" stroke-width="1.5"/><path d="M1423.6 248 L1425.8 251.8 L1428.0 248 Z" fill="#4f2ba8"/><path d="M1432.0 252 V242.5" stroke="#4f2ba8" stroke-width="1.5"/><path d="M1429.8 245 L1432.0 241.2 L1434.1999999999998 245 Z" fill="#4f2ba8"/><path d="M1565.8 241 V250.5" stroke="#4f2ba8" stroke-width="1.5"/><path d="M1563.6 248 L1565.8 251.8 L1568.0 248 Z" fill="#4f2ba8"/><path d="M1572.0 252 V242.5" stroke="#4f2ba8" stroke-width="1.5"/><path d="M1569.8 245 L1572.0 241.2 L1574.1999999999998 245 Z" fill="#4f2ba8"/><clipPath id="hc"><rect x="380" y="226" width="1357" height="40"/></clipPath><g clip-path="url(#hc)"><path d="M1729.7 241 V250.5" stroke="#4f2ba8" stroke-width="1.5"/><path d="M1727.5 248 L1729.7 251.8 L1731.9 248 Z" fill="#4f2ba8"/><path d="M1735.9 252 V242.5" stroke="#4f2ba8" stroke-width="1.5"/><path d="M1733.7 245 L1735.9 241.2 L1738.1 245 Z" fill="#4f2ba8"/></g></svg>
<div class="t" style="left:76.5px;top:12.90px;font-size:14.3px;line-height:14.3px;color:#1f1f1f;">Нормативы</div>
<div class="t" style="left:90.5px;top:41.43px;font-size:13.2px;line-height:13.2px;font-weight:700;color:#1f1f1f;letter-spacing:-0.25px;">Главная</div>
<div class="t" style="left:191px;top:42.12px;font-size:13.8px;line-height:13.8px;color:#3a3a3a;">Вставка</div>
<div class="t" style="left:291px;top:42.12px;font-size:13.8px;line-height:13.8px;color:#3a3a3a;">Объёмы</div>
<div class="t" style="left:393px;top:42.12px;font-size:13.8px;line-height:13.8px;color:#3a3a3a;">Выполнение</div>
<div class="t" style="left:523px;top:42.12px;font-size:13.8px;line-height:13.8px;color:#3a3a3a;">Вид</div>
<div class="t" style="left:597px;top:42.12px;font-size:13.8px;line-height:13.8px;color:#3a3a3a;">Операции</div>
<div class="t" style="left:708px;top:42.12px;font-size:13.8px;line-height:13.8px;color:#3a3a3a;">Отчет</div>
<div class="t" style="left:-86.5px;width:400px;text-align:center;top:140.69px;font-size:11px;line-height:11px;color:#7a7a7a;">Буфер обмена</div>
<div class="t" style="left:90px;width:400px;text-align:center;top:140.69px;font-size:11px;line-height:11px;color:#7a7a7a;">Редактирование</div>
<div class="t" style="left:266.5px;width:400px;text-align:center;top:140.69px;font-size:11px;line-height:11px;color:#7a7a7a;">Мои документы</div>
<div class="t" style="left:455.70000000000005px;width:400px;text-align:center;top:140.69px;font-size:11px;line-height:11px;color:#7a7a7a;">Создать</div>
<div class="t" style="left:610px;width:400px;text-align:center;top:140.69px;font-size:11px;line-height:11px;color:#7a7a7a;">Поиск</div>
<div class="t" style="left:852px;width:400px;text-align:center;top:140.69px;font-size:11px;line-height:11px;color:#7a7a7a;">Импорт/экспорт</div>
<div class="t" style="left:1094px;width:400px;text-align:center;top:140.69px;font-size:11px;line-height:11px;color:#7a7a7a;">Помощь</div>
<div class="t" style="left:-157.7px;width:400px;text-align:center;top:114.63px;font-size:10.6px;line-height:10.6px;font-weight:700;color:#9d9d9d;">Копировать</div>
<div class="t" style="left:-86.7px;width:400px;text-align:center;top:114.63px;font-size:10.6px;line-height:10.6px;font-weight:700;color:#9d9d9d;">Вставить</div>
<div class="t" style="left:-15.599999999999994px;width:400px;text-align:center;top:114.63px;font-size:10.6px;line-height:10.6px;font-weight:700;color:#9d9d9d;">Вырезать</div>
<div class="t" style="left:194.5px;width:400px;text-align:center;top:114.63px;font-size:10.6px;line-height:10.6px;font-weight:700;color:#1f1f1f;">Базы</div>
<div class="t" style="left:265.5px;width:400px;text-align:center;top:114.63px;font-size:10.6px;line-height:10.6px;font-weight:700;color:#1f1f1f;">Сметы</div>
<div class="t" style="left:336.5px;width:400px;text-align:center;top:114.63px;font-size:10.6px;line-height:10.6px;font-weight:700;color:#1f1f1f;">Открытые</div>
<div class="t" style="left:419.5px;width:400px;text-align:center;top:114.63px;font-size:10.6px;line-height:10.6px;font-weight:700;color:#9d9d9d;">Папка</div>
<div class="t" style="left:490.6px;width:400px;text-align:center;top:114.63px;font-size:10.6px;line-height:10.6px;font-weight:700;color:#9d9d9d;">Смета</div>
<div class="t" style="left:573.3px;width:400px;text-align:center;top:114.63px;font-size:10.6px;line-height:10.6px;font-weight:700;color:#1f1f1f;">Поиск</div>
<div class="t" style="left:644.3px;width:400px;text-align:center;top:114.63px;font-size:10.6px;line-height:10.6px;font-weight:700;color:#9d9d9d;">Заменить</div>
<div class="t" style="left:734.7px;width:400px;text-align:center;top:114.63px;font-size:10.6px;line-height:10.6px;font-weight:700;color:#9d9d9d;">Импорт сметы</div>
<div class="t" style="left:661.5999999999999px;width:400px;text-align:right;top:114.63px;font-size:10.6px;line-height:10.6px;font-weight:700;color:#9d9d9d;">Экспорт сметы</div>
<div class="t" style="left:1091.6px;top:114.63px;font-size:10.6px;line-height:10.6px;font-weight:700;color:#1f1f1f;">Пакетная выгрузка</div>
<div class="t" style="left:942px;width:400px;text-align:center;top:125.03px;font-size:10.6px;line-height:10.6px;font-weight:700;color:#1f1f1f;">документации</div>
<div class="t" style="left:1057.6px;width:400px;text-align:center;top:114.63px;font-size:10.6px;line-height:10.6px;font-weight:700;color:#1f1f1f;">Справка о</div>
<div class="t" style="left:1057.6px;width:400px;text-align:center;top:125.03px;font-size:10.6px;line-height:10.6px;font-weight:700;color:#1f1f1f;">программе</div>
<div class="t" style="left:1128.5px;width:400px;text-align:center;top:114.63px;font-size:10.6px;line-height:10.6px;font-weight:700;color:#9d9d9d;">Горячие</div>
<div class="t" style="left:1128.5px;width:400px;text-align:center;top:125.03px;font-size:10.6px;line-height:10.6px;font-weight:700;color:#9d9d9d;">клавиши</div>
<div class="t" style="left:263px;top:74.03px;font-size:10.6px;line-height:10.6px;font-weight:700;color:#9d9d9d;">Отменить</div>
<div class="t" style="left:263px;top:97.03px;font-size:10.6px;line-height:10.6px;font-weight:700;color:#9d9d9d;">Повторить</div>
<div class="t" style="left:263px;top:120.03px;font-size:10.6px;line-height:10.6px;font-weight:700;color:#9d9d9d;">Удалить</div>
<div class="t" style="left:124.5px;top:216.12px;font-size:11.2px;line-height:14px;color:#1a1a1a;">ТСН-2001 (МГЭ)</div>
<div class="t" style="left:142.4px;top:251.62px;font-size:11.2px;line-height:14px;color:#1a1a1a;">Нормативы</div>
<div class="t" style="left:160px;top:286.12px;font-size:11.2px;line-height:14px;color:#1a1a1a;">Дополнение 75 от 15.01.2025</div>
<div class="t" style="left:178.3px;top:321.42px;font-size:11.2px;line-height:14px;color:#1a1a1a;">Индексы для дополнения 75</div>
<div class="t" style="left:178.3px;top:350.12px;font-size:11.2px;line-height:14px;color:#1a1a1a;">Глава 1. Сборник "Средние<br>сметные цены на материалы,<br>изделия и конструкции"</div>
<div class="t" style="left:178.3px;top:400.12px;font-size:11.2px;line-height:14px;color:#1a1a1a;">Глава 2. Сборник "Сметные цены<br>эксплуатации строительных<br>машин и механизмов"</div>
<div class="t" style="left:178.3px;top:450.12px;font-size:11.2px;line-height:14px;color:#1a1a1a;">Глава  3. Сборники норм и<br>расценок на строительные работы</div>
<div class="t" style="left:196.3px;top:491.82px;font-size:11.2px;line-height:14px;color:#1a1a1a;">Сборник  1. Земляные работы</div>
<div class="t" style="left:196.3px;top:521.12px;font-size:11.2px;line-height:14px;color:#1a1a1a;">Сборник  3. Буровзрывные<br>работы</div>
<div class="t" style="left:196.3px;top:564.12px;font-size:11.2px;line-height:14px;color:#1a1a1a;">Сборник  4. Скважины</div>
<div class="t" style="left:196.3px;top:593.12px;font-size:11.2px;line-height:14px;color:#1a1a1a;">Сборник  5. Свайные работы,<br>закрепление грунтов</div>
<div class="t" style="left:196.3px;top:629.12px;font-size:11.2px;line-height:14px;color:#1a1a1a;">Сборник  6. Бетонные,<br>железобетонные конструкции<br>монолитные</div>
<div class="t" style="left:196.3px;top:679.12px;font-size:11.2px;line-height:14px;color:#1a1a1a;">Сборник  7. Бетонные и<br>железобетонные конструкции<br>сборные</div>
<div class="t" style="left:196.3px;top:729.12px;font-size:11.2px;line-height:14px;color:#1a1a1a;">Сборник  8. Конструкции из<br>кирпича и блоков</div>
<div class="t" style="left:196.3px;top:765.12px;font-size:11.2px;line-height:14px;color:#1a1a1a;">Сборник  9. Металлические<br>конструкции</div>
<div class="t" style="left:196.3px;top:801.12px;font-size:11.2px;line-height:14px;color:#1a1a1a;">Сборник 10. Элементы и<br>конструкции из дерева и<br>пластмасс</div>
<div class="t" style="left:196.3px;top:858.12px;font-size:11.2px;line-height:14px;color:#1a1a1a;">Сборник 11. Полы</div>
<div class="t" style="left:196.3px;top:894.12px;font-size:11.2px;line-height:14px;color:#1a1a1a;">Сборник 12. Кровли</div>
<div class="t" style="left:196.3px;top:923.02px;font-size:11.2px;line-height:14px;color:#1a1a1a;">Сборник 13. Защита<br>строительных конструкций и<br>оборудования от коррозии</div>
<div class="t" style="left:196.3px;top:973.12px;font-size:11.2px;line-height:14px;color:#1a1a1a;">Сборник 14. Конструкции в<br>сельском строительстве</div>
<div class="t" style="left:196.3px;top:1009.12px;font-size:11.2px;line-height:14px;color:#1a1a1a;">Сборник 15. Отделочные<br>работы</div>
<div class="t" style="left:196.3px;top:1045.12px;font-size:11.2px;line-height:14px;color:#1a1a1a;">Сборник 16. Трубопроводы</div>
<div class="t" style="left:411.6px;top:168.43px;font-size:11.3px;line-height:11.3px;font-weight:700;color:#1f1f1f;">Состав</div>
<div class="t" style="left:511.7px;top:167.84px;font-size:12px;line-height:12px;color:#333;">Техническая часть</div>
<div class="t" style="left:393.6px;top:202.27px;font-size:11.5px;line-height:11.5px;font-weight:700;color:#1f1f1f;">Поиск</div>
<div class="t" style="left:468.5px;top:201.16px;font-size:13.4px;line-height:13.4px;color:#ababab;">Наименование, обоснование</div>
<div class="t" style="left:388.5px;top:243.03px;font-size:11.3px;line-height:11.3px;font-weight:700;color:#1e1e1e;">Обоснование</div>
<div class="t" style="left:528px;top:239.93px;font-size:11.3px;line-height:11.3px;font-weight:700;color:#1e1e1e;">Наименование</div>
<div class="t" style="left:1028.5px;top:241.68px;font-size:11.6px;line-height:11.6px;font-weight:700;color:#1e1e1e;">Ед. изм.</div>
<div class="t" style="left:1168.5px;top:241.68px;font-size:11.6px;line-height:11.6px;font-weight:700;color:#1e1e1e;">Прямые затраты</div>
<div class="t" style="left:1308.5px;top:241.68px;font-size:11.6px;line-height:11.6px;font-weight:700;color:#1e1e1e;">ЗП</div>
<div class="t" style="left:1448.5px;top:241.68px;font-size:11.6px;line-height:11.6px;font-weight:700;color:#1e1e1e;">ЭМ</div>
<div class="t" style="left:1588.5px;top:241.68px;font-size:11.6px;line-height:11.6px;font-weight:700;color:#1e1e1e;">ЗПМ</div>
<div class="t" style="left:1738px;top:159px;width:21px;height:99px;"><div style="position:absolute;left:24.5px;top:16px;transform-origin:0 0;transform:rotate(90deg);font-size:12px;line-height:21px;color:#000;padding-top:1px;-webkit-text-stroke:0.2px #000;white-space:nowrap;">Оглавление</div></div>

<svg class="b" style="left:0;top:0" width="1759" height="1060"><path d="M2 1048.5 V1057 H10.5 Q2 1057 2 1048.5 Z" fill="#7d8fa3"/><rect x="381" y="800.5" width="639.5" height="25.3" fill="none" stroke="#ff0000" stroke-width="3"/><path d="M780.8 693.5 L500.75 791.5" stroke="#ff0000" stroke-width="3.4" stroke-linecap="round"/><path d="M479.3 799 L497.5 784.5 L504 798.5 Z" fill="#ff0000"/><path d="M488 828.2 L380.75 932.4" stroke="#ff0000" stroke-width="3.4" stroke-linecap="round"/><path d="M364.4 947.5 L375 927 L386.5 937.8 Z" fill="#ff0000"/><path d="M245 922.6 L202.7 328.0" stroke="#ff0000" stroke-width="3.2" stroke-linecap="round"/><path d="M200.9 306.6 L195.2 329 L210.2 327 Z" fill="#ff0000"/></svg>
</body></html>
